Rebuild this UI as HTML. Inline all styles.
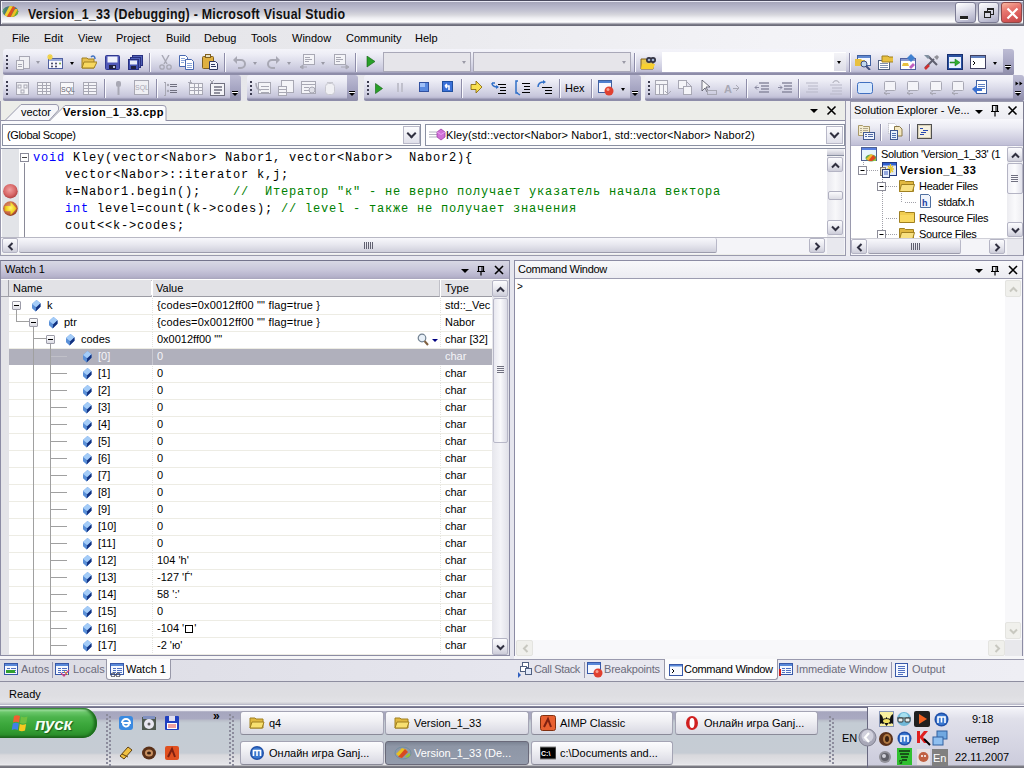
<!DOCTYPE html>
<html><head><meta charset="utf-8"><style>
*{margin:0;padding:0;box-sizing:border-box}
html,body{width:1024px;height:768px;overflow:hidden;background:#eeedf2;font-family:"Liberation Sans",sans-serif;font-size:11px;color:#000}
.a{position:absolute}
.t{position:absolute;white-space:pre;line-height:13px}
.mono{position:absolute;white-space:pre;font-family:"Liberation Mono",monospace;font-size:12px;letter-spacing:0.8px;line-height:17px}
#title{left:0;top:0;width:1024px;height:26px;background:linear-gradient(#4a4a5e 0,#4a4a5e 1px,#e8e8f4 1px,#e8e8f4 2px,#a6a6ba 2px,#b4b4c8 6px,#c4c4d2 11px,#d8d8de 15px,#eeeef2 18px,#fafafc 21px,#ffffff 22px,#d0d0d8 23px,#8a8a96 24px,#6c6c7a 25px,#6c6c7a 26px)}
.cb{width:21px;height:21px;border:1px solid #7c7c94;border-radius:3px;background:linear-gradient(160deg,#ffffff 0,#e4e4ee 35%,#c0c0d4 75%,#a8a8c0 100%)}
.tb{position:absolute;height:26px;border-radius:3px 3px 2px 2px;background:linear-gradient(#f4f4fa 0,#eeeef6 5px,#dcdcea 13px,#c8c7dc 21px,#b8b7d0 23px,#8e8da9 24px,#8e8da9 26px)}
.chev{position:absolute;top:0;height:100%;width:11px;background:linear-gradient(#b4b3cc,#9897b8);border-radius:0 3px 2px 0}
.grip{position:absolute;width:2px;height:14px;left:3px;top:6px;background:repeating-linear-gradient(#3c3c50 0,#3c3c50 2px,transparent 2px,transparent 4px)}
.sep{position:absolute;width:1px;height:19px;top:4px;background:#8e8da9;box-shadow:1px 0 0 #fafafe}
.dd{position:absolute;width:0;height:0;border-left:2.5px solid transparent;border-right:2.5px solid transparent;border-top:3px solid #000}
.ddg{border-top-color:#9a9aa6}
.hdr{position:absolute;height:19px;background:linear-gradient(#f2f2f6,#e4e4ec)}
.hdrA{background:linear-gradient(#d0cfe4,#b4b3d0)}
.sbtn{position:absolute;width:16px;height:15px;border:1px solid #b4b4c4;border-radius:2px;background:linear-gradient(#fcfcfe,#e4e4ec 60%,#cdcdd9)}
.cbtn{position:absolute;width:17px;height:18px;background:linear-gradient(#fcfcfe,#e0e0ea);border:1px solid #b8b8c8}
.cbtn::after{content:'';position:absolute;left:4px;top:6px;width:5px;height:5px;border-right:2px solid #303040;border-bottom:2px solid #303040;transform:rotate(45deg);top:3px}
</style></head><body>
<div class="a" style="left:0;top:26px;width:1024px;height:75px;background:linear-gradient(90deg,#e2e2e6,#ebebef 45%,#f3f3f7 75%,#f5f5f9)"></div>
<!-- TITLE BAR -->
<div id="title" class="a"></div>
<div class="a" style="left:0;top:0;width:1px;height:26px;background:#5a5a6e"></div><div class="a" style="left:1px;top:1px;width:1px;height:23px;background:#f4f4fa"></div>
<svg class="a" style="left:1px;top:5px" width="18" height="13" viewBox="0 0 18 13">
<defs><clipPath id="vsc"><ellipse cx="9.5" cy="6.5" rx="7.8" ry="5.6"/></clipPath></defs>
<g clip-path="url(#vsc)">
<rect x="0" y="0" width="18" height="13" fill="#4a7a78"/>
<path d="M2 13L9 0h4L6 13z" fill="#f0d030"/>
<path d="M5 13L12 1h3L9 13z" fill="#e05020"/>
<path d="M9 13l5-9h3l-4 9z" fill="#f0c020"/>
<path d="M12 13l4-7h2v7z" fill="#70b030"/>
<path d="M0 3h4L1 13H0z" fill="#5aa070"/>
</g>
</svg>
<div class="t" style="left:28px;top:6px;font-weight:bold;font-size:14px;line-height:16px;letter-spacing:0.3px;color:#111;transform:scaleX(0.885);transform-origin:0 0">Version_1_33 (Debugging) - Microsoft Visual Studio</div>
<!-- caption buttons -->
<div class="a cb" style="left:955px;top:2px"><div class="a" style="left:4px;top:13px;width:8px;height:3px;background:#222;box-shadow:0 1px 0 #fff"></div></div>
<div class="a cb" style="left:978px;top:2px"><div class="a" style="left:8px;top:5px;width:7px;height:7px;border:1px solid #222;border-top-width:2px"></div><div class="a" style="left:5px;top:8px;width:7px;height:7px;border:1px solid #222;border-top-width:2px;background:#d8d8e4"></div></div>
<div class="a cb" style="left:1001px;top:2px;background:linear-gradient(160deg,#f8b8a0 0,#e87870 35%,#d85858 70%,#c04848 100%);border-color:#904848"><svg class="a" style="left:4px;top:4px" width="13" height="13"><path d="M1.5 1.5L11.5 11.5M11.5 1.5L1.5 11.5" stroke="#fff" stroke-width="2.2"/></svg></div>
<div class="a" style="left:1023px;top:0;width:1px;height:26px;background:#6c6c7a"></div>

<!-- MENU -->
<div class="t" style="left:12px;top:32px">File</div>
<div class="t" style="left:44px;top:32px">Edit</div>
<div class="t" style="left:78px;top:32px">View</div>
<div class="t" style="left:116px;top:32px">Project</div>
<div class="t" style="left:166px;top:32px">Build</div>
<div class="t" style="left:204px;top:32px">Debug</div>
<div class="t" style="left:251px;top:32px">Tools</div>
<div class="t" style="left:292px;top:32px">Window</div>
<div class="t" style="left:346px;top:32px">Community</div>
<div class="t" style="left:415px;top:32px">Help</div>

<div class="tb" style="left:3px;top:49px;width:1011px"><div class="grip"></div></div>
<div class="a" style="left:1003px;top:49px;width:11px;height:26px;border-radius:0 3px 2px 0;background:linear-gradient(#bdbcd4,#a3a2c0 60%,#8e8da9)"></div>
<div class="a" style="left:1005px;top:65px;width:6px;height:1px;background:#000;box-shadow:0 1px 0 #fff"></div>
<div class="dd" style="left:1005px;top:67px;border-left-width:3px;border-right-width:3px;border-top-width:3px"></div>
<svg class="a" style="left:15px;top:55px" width="16" height="16" viewBox="0 0 16 16"><rect x="4.5" y="1.5" width="10" height="12" fill="#f0f0f4" stroke="#a8a8b4"/><rect x="1.5" y="5.5" width="7" height="9" fill="#f4f4f6" stroke="#a8a8b4"/><path d="M3 9.5h4M3 11.5h4" stroke="#a8a8b4"/></svg>
<div class="dd ddg" style="left:36px;top:61px"></div>
<svg class="a" style="left:47px;top:54px" width="16" height="16" viewBox="0 0 16 16"><rect x="1.5" y="4.5" width="14" height="10" fill="#f8f8fc" stroke="#5060a0"/><rect x="2" y="5" width="13" height="2" fill="#98a8d8"/><circle cx="5" cy="9.5" r="1" fill="#404060"/><circle cx="9" cy="9.5" r="1" fill="#404060"/><circle cx="13" cy="9.5" r="1" fill="#70a040"/><circle cx="5" cy="12.5" r="1" fill="#404060"/><circle cx="9" cy="12.5" r="1" fill="#404060"/><path d="M3 0v6M0 3h6M1 1l4 4M5 1l-4 4" stroke="#f0d040" stroke-width="1.2"/></svg>
<div class="dd" style="left:70px;top:62px"></div>
<svg class="a" style="left:81px;top:54px" width="16" height="16" viewBox="0 0 16 16"><path d="M1 4h5l1 1h6v9H1z" fill="#e8c050" stroke="#a08020"/><path d="M3 8h13l-3 6H1z" fill="#f8d860" stroke="#a08020"/><path d="M10 3c2-2 4-1 4 2" stroke="#4070c0" stroke-width="1.5" fill="none"/></svg>
<svg class="a" style="left:105px;top:55px" width="16" height="16" viewBox="0 0 16 16"><rect x="0.5" y="0.5" width="14" height="14" rx="1" fill="#5058b8" stroke="#303890"/><rect x="2.5" y="1.5" width="10" height="6" fill="#f0f2fc"/><rect x="4" y="10" width="7" height="4" fill="#202040"/><rect x="8" y="11" width="2" height="2" fill="#c0c8e0"/></svg>
<svg class="a" style="left:128px;top:55px" width="16" height="16" viewBox="0 0 16 16"><rect x="4.5" y="0.5" width="10" height="10" fill="#5060b8" stroke="#283080"/><rect x="2.5" y="2.5" width="10" height="10" fill="#5060b8" stroke="#283080"/><rect x="0.5" y="4.5" width="10" height="10" fill="#4050b0" stroke="#283080"/><rect x="2" y="5.5" width="7" height="4" fill="#e8ecf8"/><rect x="3" y="11" width="5" height="3" fill="#202040"/></svg>
<div class="a sep" style="left:149px;top:53px"></div>
<svg class="a" style="left:159px;top:55px" width="14" height="16" viewBox="0 0 14 16"><path d="M3 0l5 9M10 0L5 9" stroke="#a8a8b4" stroke-width="1.4"/><circle cx="3" cy="12" r="2.2" fill="none" stroke="#a8a8b4" stroke-width="1.3"/><circle cx="10" cy="12" r="2.2" fill="none" stroke="#a8a8b4" stroke-width="1.3"/></svg>
<svg class="a" style="left:179px;top:55px" width="16" height="16" viewBox="0 0 16 16"><path d="M0.5 0.5h6l2 2v9h-8z" fill="#fff" stroke="#4868b0"/><path d="M6.5 4.5h6l2 2v8h-8z" fill="#fff" stroke="#4868b0"/><path d="M2 3.5h4M2 5.5h4M2 7.5h3M8 8.5h5M8 10.5h5M8 12.5h5" stroke="#7090d0" stroke-width="0.8"/></svg>
<svg class="a" style="left:202px;top:54px" width="16" height="16" viewBox="0 0 16 16"><rect x="0.5" y="2.5" width="11" height="12" rx="1" fill="#e0b040" stroke="#806020"/><rect x="3.5" y="0.5" width="5" height="3" fill="#e8e0c0" stroke="#806020"/><path d="M7.5 7.5h6l2 2v6h-8z" fill="#f4f6fc" stroke="#303860"/><path d="M9 10.5h4M9 12.5h5" stroke="#303860"/></svg>
<div class="a sep" style="left:224px;top:53px"></div>
<svg class="a" style="left:233px;top:55px" width="13" height="16" viewBox="0 0 13 16"><path d="M3 5h5a4 4 0 0 1 0 8H5" stroke="#a8a8b4" stroke-width="2" fill="none"/><path d="M0 5l4-4v8z" fill="#a8a8b4"/></svg>
<div class="dd ddg" style="left:253px;top:62px"></div>
<svg class="a" style="left:267px;top:55px" width="13" height="16" viewBox="0 0 13 16"><path d="M10 5H5a4 4 0 0 0 0 8h3" stroke="#a8a8b4" stroke-width="2" fill="none"/><path d="M13 5L9 1v8z" fill="#a8a8b4"/></svg>
<div class="dd ddg" style="left:287px;top:62px"></div>
<svg class="a" style="left:300px;top:54px" width="16" height="16" viewBox="0 0 16 16"><rect x="3.5" y="0.5" width="11" height="10" fill="#f4f4f8" stroke="#a8a8b4"/><path d="M5 3.5h5M5 5.5h7M5 7.5h4" stroke="#a8a8b4"/><path d="M0 13h7M0 13l3-2v4z" stroke="#a8a8b4" fill="#a8a8b4"/></svg>
<div class="dd ddg" style="left:321px;top:62px"></div>
<svg class="a" style="left:333px;top:54px" width="16" height="16" viewBox="0 0 16 16"><rect x="1.5" y="0.5" width="11" height="10" fill="#f4f4f8" stroke="#a8a8b4"/><path d="M3 3.5h5M3 5.5h7M3 7.5h4" stroke="#a8a8b4"/><path d="M8 13h7M16 13l-3-2v4z" stroke="#a8a8b4" fill="#a8a8b4"/></svg>
<div class="a sep" style="left:355px;top:53px"></div>
<svg class="a" style="left:366px;top:56px" width="10" height="12" viewBox="0 0 10 12"><path d="M1 0l8 5.5L1 11z" fill="#28a028" stroke="#106010" stroke-width="0.6"/></svg>
<div class="a" style="left:383px;top:52px;width:88px;height:20px;background:#e6e5ea;border:1px solid #a9a8b8"></div>
<div class="dd ddg" style="left:462px;top:61px"></div>
<div class="a" style="left:473px;top:52px;width:158px;height:20px;background:#e6e5ea;border:1px solid #a9a8b8"></div>
<div class="dd ddg" style="left:622px;top:61px"></div>
<div class="a sep" style="left:634px;top:53px"></div>
<svg class="a" style="left:640px;top:55px" width="16" height="16" viewBox="0 0 16 16"><path d="M1 4h5l1 1h6v9H1z" fill="#e8c850" stroke="#806020"/><path d="M2 9h13l-2 5H1z" fill="#f8d030"/><circle cx="9" cy="5" r="3" fill="#303040"/><circle cx="13" cy="5" r="3" fill="#303040"/><circle cx="9" cy="5" r="1.3" fill="#a0b0d0"/><circle cx="13" cy="5" r="1.3" fill="#a0b0d0"/></svg>
<div class="a" style="left:662px;top:52px;width:184px;height:20px;background:#fff"></div>
<div class="a" style="left:834px;top:53px;width:12px;height:18px;background:linear-gradient(#f4f4f8,#dcdce6)"></div>
<div class="dd" style="left:837px;top:61px"></div>
<div class="a sep" style="left:849px;top:53px"></div>
<svg class="a" style="left:855px;top:54px" width="16" height="16" viewBox="0 0 16 16"><rect x="2.5" y="1.5" width="13" height="10" fill="#f4f8ff" stroke="#4060a0"/><rect x="3" y="2" width="12" height="2" fill="#6088d0"/><path d="M0 5h6l1 1h3v6H0z" fill="#e8c040"/><circle cx="9" cy="10" r="3" fill="#c0d8f0" stroke="#405080"/><path d="M11 12l4 4" stroke="#405080" stroke-width="2"/></svg>
<svg class="a" style="left:877px;top:54px" width="16" height="16" viewBox="0 0 16 16"><rect x="1.5" y="6.5" width="11" height="9" fill="#fff" stroke="#506080"/><path d="M3 9.5h8M3 11.5h8M3 13.5h8" stroke="#8090b0"/><path d="M5 2h6l1 1h5v5H5z" fill="#e8c040" stroke="#a08020"/></svg>
<svg class="a" style="left:900px;top:54px" width="16" height="16" viewBox="0 0 16 16"><rect x="0.5" y="4.5" width="15" height="11" fill="#fff" stroke="#5060a0"/><rect x="1" y="5" width="14" height="2" fill="#8898d0"/><path d="M11 0l4 4-4 4-4-4z" fill="#4080d0"/><path d="M3 9h5l1 3H2z" fill="#e8c040"/><path d="M9 13l4-4 2 2-4 4z" fill="#c060c0"/></svg>
<svg class="a" style="left:923px;top:54px" width="16" height="16" viewBox="0 0 16 16"><path d="M2 14L11 5M5 2l9 9" stroke="#606070" stroke-width="2"/><path d="M1 1l4 0 2 2-2 2-4-4z" fill="#8090a0"/><path d="M2 15l4-4" stroke="#d03030" stroke-width="2.5"/><path d="M11 3l3-2 2 2-2 3z" fill="#909098"/></svg>
<svg class="a" style="left:947px;top:54px" width="16" height="16" viewBox="0 0 16 16"><rect x="0.5" y="0.5" width="15" height="15" fill="#2850a0" stroke="#183070"/><rect x="2" y="3" width="12" height="11" fill="#e8f0ff"/><path d="M3 8h5V5l5 3.5-5 3.5V9H3z" fill="#30b030" stroke="#107010" stroke-width="0.5"/></svg>
<svg class="a" style="left:970px;top:55px" width="16" height="15" viewBox="0 0 16 15"><rect x="0.5" y="0.5" width="15" height="13" fill="#fff" stroke="#404060"/><rect x="1" y="1" width="14" height="2" fill="#6080c0"/><path d="M3 6l2 2-2 2" stroke="#000" fill="none"/></svg>
<div class="dd" style="left:993px;top:62px"></div>
<div class="tb" style="left:3px;top:75px;width:238px"><div class="grip"></div></div>
<div class="a" style="left:230px;top:75px;width:11px;height:26px;border-radius:0 3px 2px 0;background:linear-gradient(#bdbcd4,#a3a2c0 60%,#8e8da9)"></div>
<div class="a" style="left:232px;top:91px;width:6px;height:1px;background:#000;box-shadow:0 1px 0 #fff"></div>
<div class="dd" style="left:232px;top:93px;border-left-width:3px;border-right-width:3px;border-top-width:3px"></div>
<svg class="a" style="left:15px;top:81px" width="16" height="16" viewBox="0 0 16 16"><rect x="1.5" y="1.5" width="12" height="12" fill="#f4f4f8" stroke="#a8a8b4"/><rect x="3" y="4" width="3" height="3" fill="none" stroke="#a8a8b4"/><rect x="9" y="4" width="3" height="3" fill="none" stroke="#a8a8b4"/><rect x="6" y="9" width="3" height="3" fill="none" stroke="#a8a8b4"/></svg>
<svg class="a" style="left:37px;top:81px" width="16" height="16" viewBox="0 0 16 16"><rect x="0.5" y="1.5" width="13" height="12" fill="#f4f4f8" stroke="#a8a8b4"/><path d="M1 4.5h12M1 7.5h12M1 10.5h12M5.5 2v11M9.5 2v11" stroke="#a8a8b4"/></svg>
<svg class="a" style="left:60px;top:81px" width="16" height="16" viewBox="0 0 16 16"><rect x="0.5" y="1.5" width="13" height="12" fill="#f8f8fa" stroke="#a8a8b4"/><text x="1" y="11" font-size="7" font-family="Liberation Sans" fill="#606070">SQL</text></svg>
<svg class="a" style="left:83px;top:81px" width="16" height="16" viewBox="0 0 16 16"><rect x="0.5" y="1.5" width="13" height="12" fill="#f4f4f8" stroke="#a8a8b4"/><path d="M1 4.5h12M1 7.5h12M1 10.5h12M5.5 2v11" stroke="#a8a8b4"/></svg>
<div class="a sep" style="left:104px;top:79px"></div>
<svg class="a" style="left:114px;top:80px" width="9" height="16" viewBox="0 0 9 16"><rect x="2" y="1" width="5" height="6" rx="2" fill="#a8a8b4"/><path d="M4.5 7v8" stroke="#a8a8b4" stroke-width="2"/></svg>
<svg class="a" style="left:134px;top:80px" width="16" height="16" viewBox="0 0 16 16"><rect x="0.5" y="0.5" width="14" height="14" fill="#f0f0f4" stroke="#a8a8b4"/><text x="1" y="10" font-size="7" font-family="Liberation Sans" fill="#a8a8b4">SQL</text></svg>
<div class="a sep" style="left:156px;top:79px"></div>
<svg class="a" style="left:163px;top:81px" width="16" height="16" viewBox="0 0 16 16"><path d="M2.5 1v13M1 1.5h2M1 14.5h2" stroke="#a8a8b4"/><circle cx="5" cy="4" r="1.2" fill="#a8a8b4"/><circle cx="5" cy="10" r="1.2" fill="#a8a8b4"/><path d="M7 3.5h7M7 5.5h7M7 9.5h7M7 11.5h7" stroke="#707080"/></svg>
<svg class="a" style="left:188px;top:80px" width="16" height="16" viewBox="0 0 16 16"><rect x="1.5" y="3.5" width="13" height="11" fill="#f4f4f8" stroke="#a8a8b4"/><path d="M2 7.5h12M2 10.5h12M6.5 4v10M10.5 4v10" stroke="#a8a8b4"/><path d="M2.5 0v4M0 2.5h4" stroke="#a8a8b4"/></svg>
<svg class="a" style="left:209px;top:79px" width="16" height="17" viewBox="0 0 16 17"><rect x="1.5" y="4.5" width="14" height="12" fill="#f4f4f8" stroke="#707080"/><path d="M5 8h8M5 11h8M5 14h6" stroke="#707080" stroke-width="1.5"/><path d="M1 1l4 4M5 1l-4 4" stroke="#a8a8b4"/></svg>
<div class="tb" style="left:247px;top:75px;width:111px"><div class="grip"></div></div>
<div class="a" style="left:347px;top:75px;width:11px;height:26px;border-radius:0 3px 2px 0;background:linear-gradient(#bdbcd4,#a3a2c0 60%,#8e8da9)"></div>
<div class="a" style="left:349px;top:91px;width:6px;height:1px;background:#000;box-shadow:0 1px 0 #fff"></div>
<div class="dd" style="left:349px;top:93px;border-left-width:3px;border-right-width:3px;border-top-width:3px"></div>
<svg class="a" style="left:255px;top:80px" width="16" height="16" viewBox="0 0 16 16"><rect x="3.5" y="2.5" width="12" height="11" fill="#f4f4f8" stroke="#a8a8b4"/><path d="M6 6.5h8M6 9.5h8M6 12.5h8" stroke="#a8a8b4"/><path d="M1 3c0 5 2 7 5 7" stroke="#a8a8b4" stroke-width="1.5" fill="none"/></svg>
<svg class="a" style="left:278px;top:80px" width="16" height="16" viewBox="0 0 16 16"><rect x="3.5" y="0.5" width="12" height="12" fill="#f4f4f8" stroke="#a8a8b4"/><rect x="0.5" y="6.5" width="8" height="9" fill="#f4f4f8" stroke="#a8a8b4"/><path d="M1 9.5h7M1 12.5h7" stroke="#a8a8b4"/></svg>
<svg class="a" style="left:301px;top:80px" width="16" height="16" viewBox="0 0 16 16"><rect x="0.5" y="1.5" width="14" height="12" fill="#f4f4f8" stroke="#a8a8b4"/><path d="M1 4.5h13M3 7.5h5M3 10.5h5" stroke="#a8a8b4"/><circle cx="11" cy="10" r="3" fill="#e0e0e8" stroke="#a8a8b4"/></svg>
<svg class="a" style="left:323px;top:80px" width="14" height="16" viewBox="0 0 14 16"><rect x="2.5" y="3.5" width="9" height="11" rx="3" fill="#f0f0f4" stroke="#c8c8d0"/><path d="M4 2.5h6" stroke="#c8c8d0"/></svg>
<div class="tb" style="left:364px;top:75px;width:277px"><div class="grip"></div></div>
<div class="a" style="left:630px;top:75px;width:11px;height:26px;border-radius:0 3px 2px 0;background:linear-gradient(#bdbcd4,#a3a2c0 60%,#8e8da9)"></div>
<div class="a" style="left:632px;top:91px;width:6px;height:1px;background:#000;box-shadow:0 1px 0 #fff"></div>
<div class="dd" style="left:632px;top:93px;border-left-width:3px;border-right-width:3px;border-top-width:3px"></div>
<svg class="a" style="left:375px;top:83px" width="9" height="12" viewBox="0 0 9 12"><path d="M0.5 0.5l7 5-7 5z" fill="#28a028" stroke="#106010" stroke-width="0.6"/></svg>
<svg class="a" style="left:396px;top:82px" width="8" height="11" viewBox="0 0 8 11"><rect x="1" y="1" width="2" height="9" fill="#c0c0cc"/><rect x="5" y="1" width="2" height="9" fill="#c0c0cc"/></svg>
<svg class="a" style="left:419px;top:82px" width="10" height="10" viewBox="0 0 10 10"><rect x="0.5" y="0.5" width="9" height="9" fill="#5a8ae0" stroke="#3050a0"/><rect x="1" y="1" width="5" height="4" fill="#a0c0f8"/></svg>
<svg class="a" style="left:442px;top:81px" width="11" height="11" viewBox="0 0 11 11"><rect x="0.5" y="0.5" width="10" height="10" fill="#3a70d8" stroke="#2050a0"/><path d="M7 9V5H3M3 5l2-2M3 5l2 2" stroke="#fff" stroke-width="1.5" fill="none"/></svg>
<div class="a sep" style="left:461px;top:79px"></div>
<svg class="a" style="left:470px;top:80px" width="13" height="14" viewBox="0 0 13 14"><path d="M1 4.5h5V1l6 6-6 6V9.5H1z" fill="#f8e050" stroke="#806000" stroke-width="0.8"/></svg>
<svg class="a" style="left:490px;top:80px" width="17" height="15" viewBox="0 0 17 15"><path d="M2 3h3M2 3c0 4 4 4 6 4" stroke="#3070c8" stroke-width="1.5" fill="none"/><path d="M6 5l3 2-3 2" fill="#3070c8"/><path d="M8 4.5h8M10 7.5h6M10 10.5h6M8 13.5h8" stroke="#000"/></svg>
<svg class="a" style="left:514px;top:80px" width="17" height="16" viewBox="0 0 17 16"><path d="M4 1H2v12h2" stroke="#3070c8" stroke-width="1.5" fill="none"/><path d="M3 13l3 2" stroke="#3070c8" stroke-width="1.5"/><path d="M8 3.5h8M10 6.5h6M10 9.5h6M8 12.5h8" stroke="#000"/></svg>
<svg class="a" style="left:537px;top:80px" width="16" height="15" viewBox="0 0 16 15"><path d="M1 7c0-4 3-5 6-5" stroke="#3070c8" stroke-width="1.5" fill="none"/><path d="M6 0l3 2-3 2" fill="#3070c8"/><path d="M5 7.5h10M8 10.5h7M8 13.5h7" stroke="#000"/></svg>
<div class="a sep" style="left:559px;top:79px"></div>
<div class="t" style="left:565px;top:82px">Hex</div>
<div class="a sep" style="left:591px;top:79px"></div>
<svg class="a" style="left:598px;top:80px" width="16" height="16" viewBox="0 0 16 16"><rect x="0.5" y="0.5" width="13" height="12" fill="#f8f8ff" stroke="#4060a0"/><rect x="1" y="1" width="12" height="2" fill="#5080d0"/><circle cx="11" cy="11" r="4.5" fill="#e04030"/><circle cx="10" cy="9.5" r="1.5" fill="#f8a090"/></svg>
<div class="dd" style="left:621px;top:88px"></div>
<div class="tb" style="left:645px;top:75px;width:379px"><div class="grip"></div></div>
<div class="a" style="left:1013px;top:75px;width:11px;height:26px;border-radius:0 3px 2px 0;background:linear-gradient(#bdbcd4,#a3a2c0 60%,#8e8da9)"></div>
<div class="a" style="left:1015px;top:91px;width:6px;height:1px;background:#000;box-shadow:0 1px 0 #fff"></div>
<div class="dd" style="left:1015px;top:93px;border-left-width:3px;border-right-width:3px;border-top-width:3px"></div>
<svg class="a" style="left:655px;top:80px" width="16" height="16" viewBox="0 0 16 16"><rect x="0.5" y="0.5" width="12" height="14" fill="#f4f4f8" stroke="#a8a8b4"/><path d="M1 4.5h11M4.5 4v10M8.5 4v10" stroke="#a8a8b4"/><path d="M10 11l3 3 3-3" stroke="#a8a8b4" fill="none"/></svg>
<svg class="a" style="left:678px;top:80px" width="16" height="16" viewBox="0 0 16 16"><rect x="0.5" y="0.5" width="8" height="8" fill="#f4f4f8" stroke="#a8a8b4"/><rect x="5.5" y="6.5" width="8" height="8" fill="#f4f4f8" stroke="#a8a8b4"/><path d="M9 2l4 4" stroke="#a8a8b4"/></svg>
<svg class="a" style="left:701px;top:80px" width="16" height="16" viewBox="0 0 16 16"><path d="M1 0v11l3-3 2 4 1-1-2-4h4z" fill="#f8f8f8" stroke="#505060" stroke-width="0.8"/><rect x="6.5" y="10.5" width="9" height="4" fill="none" stroke="#a8a8b4"/></svg>
<svg class="a" style="left:724px;top:82px" width="16" height="16" viewBox="0 0 16 16"><text x="0" y="11" font-size="11" font-family="Liberation Sans" font-weight="bold" fill="#a8a8b4">A</text><path d="M9 6.5h5M12 3l3 3-3 3" stroke="#a8a8b4" fill="none"/></svg>
<div class="a sep" style="left:746px;top:79px"></div>
<svg class="a" style="left:754px;top:80px" width="16" height="16" viewBox="0 0 16 16"><path d="M5 3h10M7 6h8M7 9h8M5 12h10" stroke="#8a8aa0" stroke-width="1.5"/><path d="M1 7.5h4M1 7.5l2-2M1 7.5l2 2" stroke="#8a8aa0"/></svg>
<svg class="a" style="left:777px;top:80px" width="16" height="16" viewBox="0 0 16 16"><path d="M5 3h10M7 6h8M7 9h8M5 12h10" stroke="#8a8aa0" stroke-width="1.5"/><path d="M1 7.5h4M5 7.5l-2-2M5 7.5l-2 2" stroke="#8a8aa0"/></svg>
<div class="a sep" style="left:798px;top:79px"></div>
<svg class="a" style="left:804px;top:80px" width="16" height="16" viewBox="0 0 16 16"><path d="M2 3h12M4 6h10M4 9h10M2 12h12" stroke="#b8b8c8" stroke-width="1.2"/></svg>
<svg class="a" style="left:828px;top:79px" width="16" height="17" viewBox="0 0 16 17"><path d="M2 6h12M4 9h10M4 12h10M2 15h12" stroke="#b8b8c8" stroke-width="1.2"/><path d="M5 4c0-3 6-3 6 0" stroke="#a8a8b4" fill="none"/></svg>
<div class="a sep" style="left:850px;top:79px"></div>
<svg class="a" style="left:857px;top:80px" width="16" height="16" viewBox="0 0 16 16"><rect x="0.5" y="2.5" width="15" height="11" rx="2" fill="#d8e8fc" stroke="#4070c0"/></svg>
<svg class="a" style="left:882px;top:80px" width="16" height="16" viewBox="0 0 16 16"><rect x="2.5" y="1.5" width="11" height="9" rx="1" fill="#f4f4f8" stroke="#a8a8b4"/><path d="M2 13.5h6M5 11l-3 2 3 2" stroke="#a8a8b4" fill="none"/></svg>
<svg class="a" style="left:905px;top:80px" width="16" height="16" viewBox="0 0 16 16"><rect x="2.5" y="1.5" width="11" height="9" rx="1" fill="#f4f4f8" stroke="#a8a8b4"/><path d="M2 13.5h6M5 11l-3 2 3 2" stroke="#a8a8b4" fill="none"/></svg>
<svg class="a" style="left:928px;top:80px" width="16" height="16" viewBox="0 0 16 16"><rect x="2.5" y="1.5" width="11" height="9" rx="1" fill="#f4f4f8" stroke="#a8a8b4"/><path d="M2 13.5h6M5 11l-3 2 3 2" stroke="#a8a8b4" fill="none"/></svg>
<svg class="a" style="left:950px;top:80px" width="16" height="16" viewBox="0 0 16 16"><rect x="2.5" y="1.5" width="11" height="9" rx="1" fill="#f4f4f8" stroke="#a8a8b4"/><path d="M2 13.5h6M5 11l-3 2 3 2" stroke="#a8a8b4" fill="none"/></svg>
<svg class="a" style="left:972px;top:80px" width="16" height="16" viewBox="0 0 16 16"><rect x="4.5" y="0.5" width="10" height="13" fill="#fff" stroke="#4060a0"/><path d="M6 4.5h7M6 6.5h7M6 8.5h7" stroke="#6080c0"/><path d="M0 9l5-4v3h5v3H5v3z" fill="#3a70d0"/></svg>
<svg class="a" style="left:1015px;top:81px" width="8" height="5"><path d="M0.5 0.5l3 2-3 2zM4.5 0.5l3 2-3 2z" fill="#000"/></svg>
<!-- DOCUMENT AREA -->
<div class="a" style="left:0;top:101px;width:846px;height:155px;background:#ecede9;border-left:1px solid #9a9aae;border-right:1px solid #9a9aae;border-bottom:1px solid #9a9aae"></div>
<!-- tab strip line -->
<div class="a" style="left:1px;top:120px;width:844px;height:1px;background:#8e8ea4"></div>
<!-- inactive tab -->
<svg class="a" style="left:0;top:101px" width="180" height="21" viewBox="0 0 180 21">
<path d="M5 19.5 L21 3.5 L56 3.5 Q58 3.5 58.5 6 L58.5 9 L49 19.5 Z" fill="#f6f6f9" stroke="#9a9aae"/>
<path d="M49 20.5 L65 4.5 L163 4.5 Q166 4.5 166 7 L166 20.5 Z" fill="#fdfdfe" stroke="#9a9aae"/>
<path d="M50 20.5 L165.5 20.5" stroke="#fdfdfe" stroke-width="1.2"/>
</svg>
<div class="t" style="left:21px;top:106px">vector</div>
<div class="t" style="left:63px;top:106px;font-weight:bold;letter-spacing:0.5px">Version_1_33.cpp</div>
<!-- doc window buttons -->
<div class="dd" style="left:810px;top:109px;border-left-width:4px;border-right-width:4px;border-top-width:4px"></div>
<svg class="a" style="left:826px;top:105px" width="11" height="11"><path d="M1.5 1.5L9.5 9.5M9.5 1.5L1.5 9.5" stroke="#000" stroke-width="1.6"/></svg>
<!-- combo row -->
<div class="a" style="left:1px;top:121px;width:844px;height:27px;background:#fafafc"></div>
<div class="a" style="left:2px;top:124px;width:419px;height:22px;background:#fff;border:1px solid #8a90a2"></div>
<div class="a cbtn" style="left:403px;top:126px"></div>
<div class="t" style="left:7px;top:129px;letter-spacing:-0.35px">(Global Scope)</div>
<div class="a" style="left:425px;top:124px;width:420px;height:22px;background:#fff;border:1px solid #8a90a2"></div>
<div class="a cbtn" style="left:826px;top:126px"></div>
<svg class="a" style="left:428px;top:128px" width="18" height="13" viewBox="0 0 18 13"><path d="M1 4h8M1 6.5h8M1 9h8" stroke="#a0a0b0" stroke-width="0.8"/><path d="M13 1l4 3v5l-4 3-4-3V4z" fill="#d070d8" stroke="#a040a8" stroke-width="0.8"/><path d="M9 4l4 2.5 4-2.5" stroke="#f0b0f8" fill="none" stroke-width="0.8"/></svg>
<div class="t" style="left:446px;top:129px;letter-spacing:0.15px">Kley(std::vector&lt;Nabor&gt; Nabor1, std::vector&lt;Nabor&gt; Nabor2)</div>
<!-- editor -->
<div class="a" style="left:1px;top:148px;width:844px;height:106px;background:#fff;border-top:1px solid #8a90a2"></div>
<div class="a" style="left:2px;top:149px;width:17px;height:88px;background:#e2e4e8"></div>
<div class="a" style="left:20px;top:153px;width:9px;height:9px;border:1px solid #8a8a98;background:#fff"></div>
<div class="a" style="left:22px;top:157px;width:5px;height:1px;background:#444"></div>
<div class="a" style="left:24px;top:163px;width:1px;height:74px;background:#8a8a98"></div>
<svg class="a" style="left:2px;top:183px" width="17" height="34" viewBox="0 0 17 34">
<defs><radialGradient id="bp" cx="0.45" cy="0.4" r="0.65"><stop offset="0" stop-color="#f0a0a0"/><stop offset="0.6" stop-color="#d86868"/><stop offset="1" stop-color="#a83838"/></radialGradient>
<radialGradient id="ar" cx="0.5" cy="0.45" r="0.6"><stop offset="0" stop-color="#fff870"/><stop offset="0.6" stop-color="#f0d020"/><stop offset="1" stop-color="#d09010"/></radialGradient>
<radialGradient id="ac" cx="0.45" cy="0.4" r="0.65"><stop offset="0" stop-color="#e8a070"/><stop offset="0.7" stop-color="#c06040"/><stop offset="1" stop-color="#7a2810"/></radialGradient></defs>
<circle cx="8.4" cy="8.2" r="7.3" fill="url(#bp)"/>
<circle cx="8.4" cy="25.6" r="7.3" fill="url(#ac)"/>
<path d="M2.5 23h6v-4.2l6.2 6.8-6.2 6.8v-4.2h-6z" fill="url(#ar)"/>
</svg>
<div class="mono" style="left:33px;top:150px"><span style="color:#0000ff">void</span> Kley(vector&lt;Nabor&gt; Nabor1, vector&lt;Nabor&gt;  Nabor2){</div>
<div class="mono" style="left:33px;top:167px">    vector&lt;Nabor&gt;::iterator k,j;</div>
<div class="mono" style="left:33px;top:184px">    k=Nabor1.begin();    <span style="color:#008000">//  Итератор "к" - не верно получает указатель начала вектора</span></div>
<div class="mono" style="left:33px;top:201px">    <span style="color:#0000ff">int</span> level=count(k-&gt;codes); <span style="color:#008000">// level - также не получает значения</span></div>
<div class="mono" style="left:33px;top:218px">    cout&lt;&lt;k-&gt;codes;</div>
<!-- vertical scrollbar -->
<div class="a" style="left:827px;top:149px;width:17px;height:88px;background:linear-gradient(90deg,#e8e8ee,#f8f8fa 50%,#e8e8ee)"></div>
<div class="a" style="left:827px;top:149px;width:17px;height:7px;background:linear-gradient(#f4f4f8,#c8c8d4);border-bottom:1px solid #8a90a2"></div>
<div class="a sbtn" style="left:827px;top:157px"><svg class="a" style="left:3px;top:4px" width="9" height="7"><path d="M1 5.5L4.5 2 8 5.5" stroke="#303040" stroke-width="2" fill="none"/></svg></div>
<div class="a" style="left:828px;top:191px;width:15px;height:9px;border:1px solid #b0b0c0;border-radius:2px;background:linear-gradient(#fafafc,#dcdce4)"></div>
<div class="a sbtn" style="left:827px;top:220px"><svg class="a" style="left:3px;top:4px" width="9" height="7"><path d="M1 1.5L4.5 5 8 1.5" stroke="#303040" stroke-width="2" fill="none"/></svg></div>
<!-- horizontal scrollbar -->
<div class="a" style="left:1px;top:237px;width:844px;height:17px;background:#f4f4f8;border-top:1px solid #b8b8c4"></div>
<div class="a sbtn" style="left:2px;top:238px"><svg class="a" style="left:4px;top:3px" width="7" height="9"><path d="M5.5 1L2 4.5 5.5 8" stroke="#303040" stroke-width="2" fill="none"/></svg></div>
<div class="a" style="left:19px;top:238px;width:698px;height:15px;border-radius:2px;background:linear-gradient(#f8f8fc,#e6e6ee 50%,#cfcfdb);border-bottom:1px solid #9c9cac;border-right:1px solid #b8b8c8"></div>
<div class="a" style="left:364px;top:242px;width:9px;height:7px;background:repeating-linear-gradient(90deg,#606070 0,#606070 1px,transparent 1px,transparent 2px)"></div>
<div class="a sbtn" style="left:809px;top:238px"><svg class="a" style="left:4px;top:3px" width="7" height="9"><path d="M1.5 1L5 4.5 1.5 8" stroke="#303040" stroke-width="2" fill="none"/></svg></div>
<div class="a" style="left:827px;top:238px;width:17px;height:16px;background:#e8e8ee"></div>

<!-- SOLUTION EXPLORER -->
<div class="a" style="left:850px;top:101px;width:174px;height:155px;background:#fff;border:1px solid #9a9aae;border-right-color:#7c7c90"></div>
<div class="a" style="left:851px;top:102px;width:172px;height:17px;background:linear-gradient(#f6f6f9,#ececf2)"></div>
<div class="t" style="left:854px;top:104px">Solution Explorer - Ve...</div>
<div class="dd" style="left:975px;top:110px;border-left-width:4px;border-right-width:4px;border-top-width:4px"></div>
<svg class="a" style="left:990px;top:104px" width="10" height="13"><path d="M2.5 1.5h5v6h-5z M1 7.5h8 M5 7.5v5" stroke="#000" stroke-width="1.2" fill="none"/><path d="M6 2v5" stroke="#000"/></svg>
<svg class="a" style="left:1007px;top:105px" width="11" height="11"><path d="M1.5 1.5L9.5 9.5M9.5 1.5L1.5 9.5" stroke="#000" stroke-width="1.6"/></svg>
<div class="a" style="left:851px;top:119px;width:172px;height:27px;background:linear-gradient(#f8f8fc 0,#ececf4 8px,#d4d3e4 18px,#c0bfd6 26px,#a8a7c2 27px)"></div>
<svg class="a" style="left:858px;top:123px" width="17" height="17" viewBox="0 0 17 17"><path d="M0.5 2.5h4l1 1h6v9h-11z" fill="#f4ecd0" stroke="#a89868"/><path d="M2 5.5h2M5 5.5h5M2 7.5h2M5 7.5h5M2 9.5h2" stroke="#b0a890"/><rect x="5.5" y="9.5" width="11" height="7" fill="#f0f4fc" stroke="#405890"/><path d="M7 11.5h2M10 11.5h5M7 13.5h2M10 13.5h5" stroke="#506aa8"/></svg>
<div class="a" style="left:880px;top:124px;width:1px;height:17px;background:#8e8da9;box-shadow:1px 0 0 #fff"></div>
<svg class="a" style="left:887px;top:123px" width="17" height="17" viewBox="0 0 17 17"><path d="M1.5 0.5h6l2 2v8h-8z" fill="#fff" stroke="#b0b0b8" stroke-dasharray="1 1"/><path d="M7.5 3.5h5l2.5 2.5v7h-7.5z" fill="#f4e8c0" stroke="#8a7848"/><rect x="3.5" y="7.5" width="7" height="9" fill="#e8f0fc" stroke="#405890"/><path d="M5 10.5h4M5 12.5h4M5 14.5h4" stroke="#5070b0"/></svg>
<div class="a" style="left:909px;top:124px;width:1px;height:17px;background:#8e8da9;box-shadow:1px 0 0 #fff"></div>
<svg class="a" style="left:917px;top:124px" width="15" height="15" viewBox="0 0 15 15"><rect x="0.5" y="0.5" width="14" height="14" fill="#f4f0e0" stroke="#505050"/><rect x="1.5" y="1.5" width="12" height="12" fill="none" stroke="#d8d0b8"/><path d="M3 4.5h3M6 6.5h5M4 8.5h5M3 10.5h4" stroke="#2848b0"/></svg>
<!-- tree -->
<svg class="a" style="left:851px;top:146px" width="156" height="92" viewBox="0 0 156 92">
<g stroke="#a0a0a8" stroke-dasharray="1 1" fill="none">
<path d="M12.5 16v4M12.5 25v0"/><path d="M16 24.5h12"/>
<path d="M31.5 31v5M35 40.5h12M31.5 45v44M35 72.5h12M35 88.5h12"/>
<path d="M50.5 47v9M54 56.5h12"/>
</g>
<rect x="7.5" y="20.5" width="8" height="8" fill="#fff" stroke="#8c8c98"/><path d="M9.5 24.5h4" stroke="#000"/>
<rect x="26.5" y="36.5" width="8" height="8" fill="#fff" stroke="#8c8c98"/><path d="M28.5 40.5h4" stroke="#000"/>
<rect x="26.5" y="84.5" width="8" height="8" fill="#fff" stroke="#8c8c98"/><path d="M28.5 88.5h4" stroke="#000"/>
<!-- solution icon -->
<rect x="10.5" y="1.5" width="15" height="13" fill="#e8f6fc" stroke="#506090"/><rect x="11" y="2" width="14" height="2" fill="#5880e0"/><ellipse cx="20" cy="12" rx="5.5" ry="3.5" fill="#60a850"/><path d="M15 13l5-5 3 2-4 5z" fill="#f0c030"/><path d="M17 15l5-6 3 3-4 3z" fill="#e04820"/><path d="M22 15l3-3v3z" fill="#90c840"/>
<!-- project icon -->
<rect x="31.5" y="16.5" width="14" height="13" fill="#e0e8f8" stroke="#203880"/><rect x="32" y="17" width="13" height="2.5" fill="#3060d0"/><path d="M37 20l5 6M42 20l-5 6M39.5 18v9M36 23h7" stroke="#e8c830" stroke-width="1.3"/><rect x="29.5" y="21.5" width="5" height="8" fill="#f0e8d0" stroke="#8a8070"/><rect x="31.5" y="23.5" width="7" height="8" fill="#e8f0fc" stroke="#304070"/><path d="M33 26h4M33 28h4" stroke="#4060c0"/>
<!-- folders -->
<g><path d="M48.5 34.5h5l1 1h8v10h-14z" fill="#e0b840" stroke="#a08020"/><path d="M50.5 38.5h13l-2 7h-13z" fill="#f8e080" stroke="#a08020"/></g>
<g><path d="M69.5 48.5h8l2 2v11h-10z" fill="#f0f4fc" stroke="#5070a0"/><text x="71" y="60" font-size="9" font-family="Liberation Sans" font-weight="bold" fill="#2040a0">h</text></g>
<g><path d="M48.5 65.5h5l1 1h9v10h-15z" fill="#f0cc50" stroke="#a08020"/><rect x="49" y="69" width="14" height="7" fill="#f8d860"/></g>
<g><path d="M48.5 82.5h5l1 1h8v10h-14z" fill="#e0b840" stroke="#a08020"/><path d="M50.5 86.5h13l-2 7h-13z" fill="#f8e080" stroke="#a08020"/></g>
</svg>
<div class="t" style="left:881px;top:148px;letter-spacing:-0.3px">Solution 'Version_1_33' (1</div>
<div class="t" style="left:900px;top:164px;font-weight:bold;letter-spacing:0.5px">Version_1_33</div>
<div class="t" style="left:919px;top:180px;letter-spacing:-0.3px">Header Files</div>
<div class="t" style="left:938px;top:196px;letter-spacing:-0.3px">stdafx.h</div>
<div class="t" style="left:919px;top:212px;letter-spacing:-0.3px">Resource Files</div>
<div class="t" style="left:919px;top:228px;height:10px;overflow:hidden;letter-spacing:-0.3px">Source Files</div>
<!-- SE vscroll -->
<div class="a" style="left:1007px;top:146px;width:16px;height:92px;background:linear-gradient(90deg,#ececf0,#fafafc 50%,#ececf0)"></div>
<div class="a sbtn" style="left:1007px;top:147px"><svg class="a" style="left:3px;top:4px" width="9" height="7"><path d="M1 5.5L4.5 2 8 5.5" stroke="#303040" stroke-width="2" fill="none"/></svg></div>
<div class="a" style="left:1007px;top:163px;width:16px;height:31px;border:1px solid #b4b4c4;border-radius:2px;background:linear-gradient(90deg,#f0f0f6,#fcfcfe 50%,#e0e0ea)"></div>
<div class="a" style="left:1011px;top:175px;width:7px;height:7px;background:repeating-linear-gradient(#707080 0,#707080 1px,transparent 1px,transparent 2px)"></div>
<div class="a sbtn" style="left:1007px;top:222px"><svg class="a" style="left:3px;top:4px" width="9" height="7"><path d="M1 1.5L4.5 5 8 1.5" stroke="#303040" stroke-width="2" fill="none"/></svg></div>
<!-- SE hscroll -->
<div class="a" style="left:851px;top:238px;width:172px;height:17px;background:#f4f4f8;border-top:1px solid #d0d0d8"></div>
<div class="a sbtn" style="left:851px;top:239px"><svg class="a" style="left:4px;top:3px" width="7" height="9"><path d="M5.5 1L2 4.5 5.5 8" stroke="#303040" stroke-width="2" fill="none"/></svg></div>
<div class="a" style="left:868px;top:239px;width:93px;height:15px;border-radius:2px;background:linear-gradient(#f8f8fc,#e6e6ee 50%,#cfcfdb);border-bottom:1px solid #9c9cac;border-right:1px solid #b8b8c8"></div>
<div class="a" style="left:911px;top:243px;width:9px;height:7px;background:repeating-linear-gradient(90deg,#606070 0,#606070 1px,transparent 1px,transparent 2px)"></div>
<div class="a sbtn" style="left:989px;top:239px"><svg class="a" style="left:4px;top:3px" width="7" height="9"><path d="M1.5 1L5 4.5 1.5 8" stroke="#303040" stroke-width="2" fill="none"/></svg></div>
<div class="a" style="left:1007px;top:239px;width:16px;height:16px;background:#e8e8ee"></div>

<div class="a" style="left:0;top:256px;width:1024px;height:4px;background:#e8e8f0"></div>
<div class="a" style="left:0;top:260px;width:510px;height:396px;background:#fff;border:1px solid #8c8ca4;border-top-color:#74748c"></div>
<div class="a" style="left:1px;top:261px;width:508px;height:18px;background:linear-gradient(#d8d8e4,#c8c6da 50%,#b6b3cc 85%,#a8a5bc)"></div>
<div class="t" style="left:5px;top:263px">Watch 1</div>
<div class="dd" style="left:461px;top:269px;border-left-width:4px;border-right-width:4px;border-top-width:4px"></div>
<svg class="a" style="left:476px;top:265px" width="10" height="11"><path d="M2.5 1.5h5v5h-5z M1 6.5h8 M5 6.5v4" stroke="#000" stroke-width="1.2" fill="none"/><path d="M6 2v4" stroke="#000"/></svg>
<svg class="a" style="left:494px;top:265px" width="10" height="10"><path d="M1 1L9 9M9 1L1 9" stroke="#000" stroke-width="1.6"/></svg>
<div class="a" style="left:1px;top:279px;width:491px;height:18px;background:#fff"></div>
<div class="a" style="left:1px;top:280px;width:8px;height:17px;background:#e4e4e8;border-right:1px solid #a0a0a8;border-bottom:1px solid #a0a0a8"></div>
<div class="a" style="left:9px;top:280px;width:143px;height:17px;background:#e2e2e6;border-bottom:1px solid #9c9ca4;border-right:1px solid #c0c0c8"></div>
<div class="a" style="left:153px;top:280px;width:287px;height:17px;background:#e2e2e6;border-bottom:1px solid #9c9ca4;border-right:1px solid #c0c0c8"></div>
<div class="a" style="left:441px;top:280px;width:51px;height:17px;background:#e2e2e6;border-bottom:1px solid #9c9ca4"></div>
<div class="a" style="left:151px;top:281px;width:1px;height:14px;background:#fff"></div>
<div class="t" style="left:13px;top:282px">Name</div>
<div class="t" style="left:156px;top:282px">Value</div>
<div class="t" style="left:445px;top:282px">Type</div>
<div class="a" style="left:1px;top:297px;width:8px;height:358px;background:#e4e4e8"></div>
<div class="a" style="left:9px;top:314px;width:483px;height:1px;background:#edece4"></div>
<div class="a" style="left:152px;top:298px;width:1px;height:16px;background:repeating-linear-gradient(#e4e4e0 0,#e4e4e0 1px,transparent 1px,transparent 2px)"></div>
<div class="a" style="left:440px;top:298px;width:1px;height:16px;background:repeating-linear-gradient(#e4e4e0 0,#e4e4e0 1px,transparent 1px,transparent 2px)"></div>
<svg class="a" style="left:32px;top:300px" width="9" height="12" viewBox="0 0 9 12"><path d="M4.5 0L8.5 3.2V6.8L3.6 11.5 0 8.3V4z" fill="#5a90d8"/><path d="M0 4L4.5 0 8.5 3.2 4.3 7.2z" fill="#a4ccf8"/><path d="M8.5 3.2V6.8L3.6 11.5 4.3 7.2z" fill="#12307e"/></svg>
<div class="t" style="left:47px;top:299px;color:#000">k</div>
<div class="t" style="left:157px;top:299px;color:#000;width:280px;overflow:hidden;letter-spacing:0.18px;">{codes=0x0012ff00 "" flag=true }</div>
<div class="t" style="left:445px;top:299px;color:#000;width:46px;overflow:hidden">std::_Vec</div>
<div class="a" style="left:9px;top:331px;width:483px;height:1px;background:#edece4"></div>
<div class="a" style="left:152px;top:315px;width:1px;height:16px;background:repeating-linear-gradient(#e4e4e0 0,#e4e4e0 1px,transparent 1px,transparent 2px)"></div>
<div class="a" style="left:440px;top:315px;width:1px;height:16px;background:repeating-linear-gradient(#e4e4e0 0,#e4e4e0 1px,transparent 1px,transparent 2px)"></div>
<svg class="a" style="left:49px;top:317px" width="9" height="12" viewBox="0 0 9 12"><path d="M4.5 0L8.5 3.2V6.8L3.6 11.5 0 8.3V4z" fill="#5a90d8"/><path d="M0 4L4.5 0 8.5 3.2 4.3 7.2z" fill="#a4ccf8"/><path d="M8.5 3.2V6.8L3.6 11.5 4.3 7.2z" fill="#12307e"/></svg>
<div class="t" style="left:64px;top:316px;color:#000">ptr</div>
<div class="t" style="left:157px;top:316px;color:#000;width:280px;overflow:hidden;letter-spacing:0.18px;">{codes=0x0012ff00 "" flag=true }</div>
<div class="t" style="left:445px;top:316px;color:#000;width:46px;overflow:hidden">Nabor</div>
<div class="a" style="left:9px;top:348px;width:483px;height:1px;background:#edece4"></div>
<div class="a" style="left:152px;top:332px;width:1px;height:16px;background:repeating-linear-gradient(#e4e4e0 0,#e4e4e0 1px,transparent 1px,transparent 2px)"></div>
<div class="a" style="left:440px;top:332px;width:1px;height:16px;background:repeating-linear-gradient(#e4e4e0 0,#e4e4e0 1px,transparent 1px,transparent 2px)"></div>
<svg class="a" style="left:66px;top:334px" width="9" height="12" viewBox="0 0 9 12"><path d="M4.5 0L8.5 3.2V6.8L3.6 11.5 0 8.3V4z" fill="#5a90d8"/><path d="M0 4L4.5 0 8.5 3.2 4.3 7.2z" fill="#a4ccf8"/><path d="M8.5 3.2V6.8L3.6 11.5 4.3 7.2z" fill="#12307e"/></svg>
<div class="t" style="left:81px;top:333px;color:#000">codes</div>
<div class="t" style="left:157px;top:333px;color:#000;width:280px;overflow:hidden;">0x0012ff00 ""</div>
<div class="t" style="left:445px;top:333px;color:#000;width:46px;overflow:hidden">char [32]</div>
<div class="a" style="left:9px;top:349px;width:483px;height:16px;background:#b0b0bc"></div>
<div class="a" style="left:152px;top:349px;width:1px;height:16px;background:#c8c8d0"></div>
<svg class="a" style="left:83px;top:351px" width="9" height="12" viewBox="0 0 9 12"><path d="M4.5 0L8.5 3.2V6.8L3.6 11.5 0 8.3V4z" fill="#5a90d8"/><path d="M0 4L4.5 0 8.5 3.2 4.3 7.2z" fill="#a4ccf8"/><path d="M8.5 3.2V6.8L3.6 11.5 4.3 7.2z" fill="#12307e"/></svg>
<div class="t" style="left:98px;top:350px;color:#f4f4f8">[0]</div>
<div class="t" style="left:157px;top:350px;color:#f4f4f8;width:280px;overflow:hidden;">0</div>
<div class="t" style="left:445px;top:350px;color:#f4f4f8;width:46px;overflow:hidden">char</div>
<div class="a" style="left:9px;top:382px;width:483px;height:1px;background:#edece4"></div>
<div class="a" style="left:152px;top:366px;width:1px;height:16px;background:repeating-linear-gradient(#e4e4e0 0,#e4e4e0 1px,transparent 1px,transparent 2px)"></div>
<div class="a" style="left:440px;top:366px;width:1px;height:16px;background:repeating-linear-gradient(#e4e4e0 0,#e4e4e0 1px,transparent 1px,transparent 2px)"></div>
<svg class="a" style="left:83px;top:368px" width="9" height="12" viewBox="0 0 9 12"><path d="M4.5 0L8.5 3.2V6.8L3.6 11.5 0 8.3V4z" fill="#5a90d8"/><path d="M0 4L4.5 0 8.5 3.2 4.3 7.2z" fill="#a4ccf8"/><path d="M8.5 3.2V6.8L3.6 11.5 4.3 7.2z" fill="#12307e"/></svg>
<div class="t" style="left:98px;top:367px;color:#000">[1]</div>
<div class="t" style="left:157px;top:367px;color:#000;width:280px;overflow:hidden;">0</div>
<div class="t" style="left:445px;top:367px;color:#000;width:46px;overflow:hidden">char</div>
<div class="a" style="left:9px;top:399px;width:483px;height:1px;background:#edece4"></div>
<div class="a" style="left:152px;top:383px;width:1px;height:16px;background:repeating-linear-gradient(#e4e4e0 0,#e4e4e0 1px,transparent 1px,transparent 2px)"></div>
<div class="a" style="left:440px;top:383px;width:1px;height:16px;background:repeating-linear-gradient(#e4e4e0 0,#e4e4e0 1px,transparent 1px,transparent 2px)"></div>
<svg class="a" style="left:83px;top:385px" width="9" height="12" viewBox="0 0 9 12"><path d="M4.5 0L8.5 3.2V6.8L3.6 11.5 0 8.3V4z" fill="#5a90d8"/><path d="M0 4L4.5 0 8.5 3.2 4.3 7.2z" fill="#a4ccf8"/><path d="M8.5 3.2V6.8L3.6 11.5 4.3 7.2z" fill="#12307e"/></svg>
<div class="t" style="left:98px;top:384px;color:#000">[2]</div>
<div class="t" style="left:157px;top:384px;color:#000;width:280px;overflow:hidden;">0</div>
<div class="t" style="left:445px;top:384px;color:#000;width:46px;overflow:hidden">char</div>
<div class="a" style="left:9px;top:416px;width:483px;height:1px;background:#edece4"></div>
<div class="a" style="left:152px;top:400px;width:1px;height:16px;background:repeating-linear-gradient(#e4e4e0 0,#e4e4e0 1px,transparent 1px,transparent 2px)"></div>
<div class="a" style="left:440px;top:400px;width:1px;height:16px;background:repeating-linear-gradient(#e4e4e0 0,#e4e4e0 1px,transparent 1px,transparent 2px)"></div>
<svg class="a" style="left:83px;top:402px" width="9" height="12" viewBox="0 0 9 12"><path d="M4.5 0L8.5 3.2V6.8L3.6 11.5 0 8.3V4z" fill="#5a90d8"/><path d="M0 4L4.5 0 8.5 3.2 4.3 7.2z" fill="#a4ccf8"/><path d="M8.5 3.2V6.8L3.6 11.5 4.3 7.2z" fill="#12307e"/></svg>
<div class="t" style="left:98px;top:401px;color:#000">[3]</div>
<div class="t" style="left:157px;top:401px;color:#000;width:280px;overflow:hidden;">0</div>
<div class="t" style="left:445px;top:401px;color:#000;width:46px;overflow:hidden">char</div>
<div class="a" style="left:9px;top:433px;width:483px;height:1px;background:#edece4"></div>
<div class="a" style="left:152px;top:417px;width:1px;height:16px;background:repeating-linear-gradient(#e4e4e0 0,#e4e4e0 1px,transparent 1px,transparent 2px)"></div>
<div class="a" style="left:440px;top:417px;width:1px;height:16px;background:repeating-linear-gradient(#e4e4e0 0,#e4e4e0 1px,transparent 1px,transparent 2px)"></div>
<svg class="a" style="left:83px;top:419px" width="9" height="12" viewBox="0 0 9 12"><path d="M4.5 0L8.5 3.2V6.8L3.6 11.5 0 8.3V4z" fill="#5a90d8"/><path d="M0 4L4.5 0 8.5 3.2 4.3 7.2z" fill="#a4ccf8"/><path d="M8.5 3.2V6.8L3.6 11.5 4.3 7.2z" fill="#12307e"/></svg>
<div class="t" style="left:98px;top:418px;color:#000">[4]</div>
<div class="t" style="left:157px;top:418px;color:#000;width:280px;overflow:hidden;">0</div>
<div class="t" style="left:445px;top:418px;color:#000;width:46px;overflow:hidden">char</div>
<div class="a" style="left:9px;top:450px;width:483px;height:1px;background:#edece4"></div>
<div class="a" style="left:152px;top:434px;width:1px;height:16px;background:repeating-linear-gradient(#e4e4e0 0,#e4e4e0 1px,transparent 1px,transparent 2px)"></div>
<div class="a" style="left:440px;top:434px;width:1px;height:16px;background:repeating-linear-gradient(#e4e4e0 0,#e4e4e0 1px,transparent 1px,transparent 2px)"></div>
<svg class="a" style="left:83px;top:436px" width="9" height="12" viewBox="0 0 9 12"><path d="M4.5 0L8.5 3.2V6.8L3.6 11.5 0 8.3V4z" fill="#5a90d8"/><path d="M0 4L4.5 0 8.5 3.2 4.3 7.2z" fill="#a4ccf8"/><path d="M8.5 3.2V6.8L3.6 11.5 4.3 7.2z" fill="#12307e"/></svg>
<div class="t" style="left:98px;top:435px;color:#000">[5]</div>
<div class="t" style="left:157px;top:435px;color:#000;width:280px;overflow:hidden;">0</div>
<div class="t" style="left:445px;top:435px;color:#000;width:46px;overflow:hidden">char</div>
<div class="a" style="left:9px;top:467px;width:483px;height:1px;background:#edece4"></div>
<div class="a" style="left:152px;top:451px;width:1px;height:16px;background:repeating-linear-gradient(#e4e4e0 0,#e4e4e0 1px,transparent 1px,transparent 2px)"></div>
<div class="a" style="left:440px;top:451px;width:1px;height:16px;background:repeating-linear-gradient(#e4e4e0 0,#e4e4e0 1px,transparent 1px,transparent 2px)"></div>
<svg class="a" style="left:83px;top:453px" width="9" height="12" viewBox="0 0 9 12"><path d="M4.5 0L8.5 3.2V6.8L3.6 11.5 0 8.3V4z" fill="#5a90d8"/><path d="M0 4L4.5 0 8.5 3.2 4.3 7.2z" fill="#a4ccf8"/><path d="M8.5 3.2V6.8L3.6 11.5 4.3 7.2z" fill="#12307e"/></svg>
<div class="t" style="left:98px;top:452px;color:#000">[6]</div>
<div class="t" style="left:157px;top:452px;color:#000;width:280px;overflow:hidden;">0</div>
<div class="t" style="left:445px;top:452px;color:#000;width:46px;overflow:hidden">char</div>
<div class="a" style="left:9px;top:484px;width:483px;height:1px;background:#edece4"></div>
<div class="a" style="left:152px;top:468px;width:1px;height:16px;background:repeating-linear-gradient(#e4e4e0 0,#e4e4e0 1px,transparent 1px,transparent 2px)"></div>
<div class="a" style="left:440px;top:468px;width:1px;height:16px;background:repeating-linear-gradient(#e4e4e0 0,#e4e4e0 1px,transparent 1px,transparent 2px)"></div>
<svg class="a" style="left:83px;top:470px" width="9" height="12" viewBox="0 0 9 12"><path d="M4.5 0L8.5 3.2V6.8L3.6 11.5 0 8.3V4z" fill="#5a90d8"/><path d="M0 4L4.5 0 8.5 3.2 4.3 7.2z" fill="#a4ccf8"/><path d="M8.5 3.2V6.8L3.6 11.5 4.3 7.2z" fill="#12307e"/></svg>
<div class="t" style="left:98px;top:469px;color:#000">[7]</div>
<div class="t" style="left:157px;top:469px;color:#000;width:280px;overflow:hidden;">0</div>
<div class="t" style="left:445px;top:469px;color:#000;width:46px;overflow:hidden">char</div>
<div class="a" style="left:9px;top:501px;width:483px;height:1px;background:#edece4"></div>
<div class="a" style="left:152px;top:485px;width:1px;height:16px;background:repeating-linear-gradient(#e4e4e0 0,#e4e4e0 1px,transparent 1px,transparent 2px)"></div>
<div class="a" style="left:440px;top:485px;width:1px;height:16px;background:repeating-linear-gradient(#e4e4e0 0,#e4e4e0 1px,transparent 1px,transparent 2px)"></div>
<svg class="a" style="left:83px;top:487px" width="9" height="12" viewBox="0 0 9 12"><path d="M4.5 0L8.5 3.2V6.8L3.6 11.5 0 8.3V4z" fill="#5a90d8"/><path d="M0 4L4.5 0 8.5 3.2 4.3 7.2z" fill="#a4ccf8"/><path d="M8.5 3.2V6.8L3.6 11.5 4.3 7.2z" fill="#12307e"/></svg>
<div class="t" style="left:98px;top:486px;color:#000">[8]</div>
<div class="t" style="left:157px;top:486px;color:#000;width:280px;overflow:hidden;">0</div>
<div class="t" style="left:445px;top:486px;color:#000;width:46px;overflow:hidden">char</div>
<div class="a" style="left:9px;top:518px;width:483px;height:1px;background:#edece4"></div>
<div class="a" style="left:152px;top:502px;width:1px;height:16px;background:repeating-linear-gradient(#e4e4e0 0,#e4e4e0 1px,transparent 1px,transparent 2px)"></div>
<div class="a" style="left:440px;top:502px;width:1px;height:16px;background:repeating-linear-gradient(#e4e4e0 0,#e4e4e0 1px,transparent 1px,transparent 2px)"></div>
<svg class="a" style="left:83px;top:504px" width="9" height="12" viewBox="0 0 9 12"><path d="M4.5 0L8.5 3.2V6.8L3.6 11.5 0 8.3V4z" fill="#5a90d8"/><path d="M0 4L4.5 0 8.5 3.2 4.3 7.2z" fill="#a4ccf8"/><path d="M8.5 3.2V6.8L3.6 11.5 4.3 7.2z" fill="#12307e"/></svg>
<div class="t" style="left:98px;top:503px;color:#000">[9]</div>
<div class="t" style="left:157px;top:503px;color:#000;width:280px;overflow:hidden;">0</div>
<div class="t" style="left:445px;top:503px;color:#000;width:46px;overflow:hidden">char</div>
<div class="a" style="left:9px;top:535px;width:483px;height:1px;background:#edece4"></div>
<div class="a" style="left:152px;top:519px;width:1px;height:16px;background:repeating-linear-gradient(#e4e4e0 0,#e4e4e0 1px,transparent 1px,transparent 2px)"></div>
<div class="a" style="left:440px;top:519px;width:1px;height:16px;background:repeating-linear-gradient(#e4e4e0 0,#e4e4e0 1px,transparent 1px,transparent 2px)"></div>
<svg class="a" style="left:83px;top:521px" width="9" height="12" viewBox="0 0 9 12"><path d="M4.5 0L8.5 3.2V6.8L3.6 11.5 0 8.3V4z" fill="#5a90d8"/><path d="M0 4L4.5 0 8.5 3.2 4.3 7.2z" fill="#a4ccf8"/><path d="M8.5 3.2V6.8L3.6 11.5 4.3 7.2z" fill="#12307e"/></svg>
<div class="t" style="left:98px;top:520px;color:#000">[10]</div>
<div class="t" style="left:157px;top:520px;color:#000;width:280px;overflow:hidden;">0</div>
<div class="t" style="left:445px;top:520px;color:#000;width:46px;overflow:hidden">char</div>
<div class="a" style="left:9px;top:552px;width:483px;height:1px;background:#edece4"></div>
<div class="a" style="left:152px;top:536px;width:1px;height:16px;background:repeating-linear-gradient(#e4e4e0 0,#e4e4e0 1px,transparent 1px,transparent 2px)"></div>
<div class="a" style="left:440px;top:536px;width:1px;height:16px;background:repeating-linear-gradient(#e4e4e0 0,#e4e4e0 1px,transparent 1px,transparent 2px)"></div>
<svg class="a" style="left:83px;top:538px" width="9" height="12" viewBox="0 0 9 12"><path d="M4.5 0L8.5 3.2V6.8L3.6 11.5 0 8.3V4z" fill="#5a90d8"/><path d="M0 4L4.5 0 8.5 3.2 4.3 7.2z" fill="#a4ccf8"/><path d="M8.5 3.2V6.8L3.6 11.5 4.3 7.2z" fill="#12307e"/></svg>
<div class="t" style="left:98px;top:537px;color:#000">[11]</div>
<div class="t" style="left:157px;top:537px;color:#000;width:280px;overflow:hidden;">0</div>
<div class="t" style="left:445px;top:537px;color:#000;width:46px;overflow:hidden">char</div>
<div class="a" style="left:9px;top:569px;width:483px;height:1px;background:#edece4"></div>
<div class="a" style="left:152px;top:553px;width:1px;height:16px;background:repeating-linear-gradient(#e4e4e0 0,#e4e4e0 1px,transparent 1px,transparent 2px)"></div>
<div class="a" style="left:440px;top:553px;width:1px;height:16px;background:repeating-linear-gradient(#e4e4e0 0,#e4e4e0 1px,transparent 1px,transparent 2px)"></div>
<svg class="a" style="left:83px;top:555px" width="9" height="12" viewBox="0 0 9 12"><path d="M4.5 0L8.5 3.2V6.8L3.6 11.5 0 8.3V4z" fill="#5a90d8"/><path d="M0 4L4.5 0 8.5 3.2 4.3 7.2z" fill="#a4ccf8"/><path d="M8.5 3.2V6.8L3.6 11.5 4.3 7.2z" fill="#12307e"/></svg>
<div class="t" style="left:98px;top:554px;color:#000">[12]</div>
<div class="t" style="left:157px;top:554px;color:#000;width:280px;overflow:hidden;">104 'h'</div>
<div class="t" style="left:445px;top:554px;color:#000;width:46px;overflow:hidden">char</div>
<div class="a" style="left:9px;top:586px;width:483px;height:1px;background:#edece4"></div>
<div class="a" style="left:152px;top:570px;width:1px;height:16px;background:repeating-linear-gradient(#e4e4e0 0,#e4e4e0 1px,transparent 1px,transparent 2px)"></div>
<div class="a" style="left:440px;top:570px;width:1px;height:16px;background:repeating-linear-gradient(#e4e4e0 0,#e4e4e0 1px,transparent 1px,transparent 2px)"></div>
<svg class="a" style="left:83px;top:572px" width="9" height="12" viewBox="0 0 9 12"><path d="M4.5 0L8.5 3.2V6.8L3.6 11.5 0 8.3V4z" fill="#5a90d8"/><path d="M0 4L4.5 0 8.5 3.2 4.3 7.2z" fill="#a4ccf8"/><path d="M8.5 3.2V6.8L3.6 11.5 4.3 7.2z" fill="#12307e"/></svg>
<div class="t" style="left:98px;top:571px;color:#000">[13]</div>
<div class="t" style="left:157px;top:571px;color:#000;width:280px;overflow:hidden;">-127 'Ѓ'</div>
<div class="t" style="left:445px;top:571px;color:#000;width:46px;overflow:hidden">char</div>
<div class="a" style="left:9px;top:603px;width:483px;height:1px;background:#edece4"></div>
<div class="a" style="left:152px;top:587px;width:1px;height:16px;background:repeating-linear-gradient(#e4e4e0 0,#e4e4e0 1px,transparent 1px,transparent 2px)"></div>
<div class="a" style="left:440px;top:587px;width:1px;height:16px;background:repeating-linear-gradient(#e4e4e0 0,#e4e4e0 1px,transparent 1px,transparent 2px)"></div>
<svg class="a" style="left:83px;top:589px" width="9" height="12" viewBox="0 0 9 12"><path d="M4.5 0L8.5 3.2V6.8L3.6 11.5 0 8.3V4z" fill="#5a90d8"/><path d="M0 4L4.5 0 8.5 3.2 4.3 7.2z" fill="#a4ccf8"/><path d="M8.5 3.2V6.8L3.6 11.5 4.3 7.2z" fill="#12307e"/></svg>
<div class="t" style="left:98px;top:588px;color:#000">[14]</div>
<div class="t" style="left:157px;top:588px;color:#000;width:280px;overflow:hidden;">58 ':'</div>
<div class="t" style="left:445px;top:588px;color:#000;width:46px;overflow:hidden">char</div>
<div class="a" style="left:9px;top:620px;width:483px;height:1px;background:#edece4"></div>
<div class="a" style="left:152px;top:604px;width:1px;height:16px;background:repeating-linear-gradient(#e4e4e0 0,#e4e4e0 1px,transparent 1px,transparent 2px)"></div>
<div class="a" style="left:440px;top:604px;width:1px;height:16px;background:repeating-linear-gradient(#e4e4e0 0,#e4e4e0 1px,transparent 1px,transparent 2px)"></div>
<svg class="a" style="left:83px;top:606px" width="9" height="12" viewBox="0 0 9 12"><path d="M4.5 0L8.5 3.2V6.8L3.6 11.5 0 8.3V4z" fill="#5a90d8"/><path d="M0 4L4.5 0 8.5 3.2 4.3 7.2z" fill="#a4ccf8"/><path d="M8.5 3.2V6.8L3.6 11.5 4.3 7.2z" fill="#12307e"/></svg>
<div class="t" style="left:98px;top:605px;color:#000">[15]</div>
<div class="t" style="left:157px;top:605px;color:#000;width:280px;overflow:hidden;">0</div>
<div class="t" style="left:445px;top:605px;color:#000;width:46px;overflow:hidden">char</div>
<div class="a" style="left:9px;top:637px;width:483px;height:1px;background:#edece4"></div>
<div class="a" style="left:152px;top:621px;width:1px;height:16px;background:repeating-linear-gradient(#e4e4e0 0,#e4e4e0 1px,transparent 1px,transparent 2px)"></div>
<div class="a" style="left:440px;top:621px;width:1px;height:16px;background:repeating-linear-gradient(#e4e4e0 0,#e4e4e0 1px,transparent 1px,transparent 2px)"></div>
<svg class="a" style="left:83px;top:623px" width="9" height="12" viewBox="0 0 9 12"><path d="M4.5 0L8.5 3.2V6.8L3.6 11.5 0 8.3V4z" fill="#5a90d8"/><path d="M0 4L4.5 0 8.5 3.2 4.3 7.2z" fill="#a4ccf8"/><path d="M8.5 3.2V6.8L3.6 11.5 4.3 7.2z" fill="#12307e"/></svg>
<div class="t" style="left:98px;top:622px;color:#000">[16]</div>
<div class="t" style="left:157px;top:622px;color:#000;width:280px;overflow:hidden;">-104 '<span style="display:inline-block;width:8px;height:8px;border:1px solid currentColor;margin:0 1px;vertical-align:-0.5px"></span>'</div>
<div class="t" style="left:445px;top:622px;color:#000;width:46px;overflow:hidden">char</div>
<div class="a" style="left:9px;top:654px;width:483px;height:1px;background:#edece4"></div>
<div class="a" style="left:152px;top:638px;width:1px;height:16px;background:repeating-linear-gradient(#e4e4e0 0,#e4e4e0 1px,transparent 1px,transparent 2px)"></div>
<div class="a" style="left:440px;top:638px;width:1px;height:16px;background:repeating-linear-gradient(#e4e4e0 0,#e4e4e0 1px,transparent 1px,transparent 2px)"></div>
<svg class="a" style="left:83px;top:640px" width="9" height="12" viewBox="0 0 9 12"><path d="M4.5 0L8.5 3.2V6.8L3.6 11.5 0 8.3V4z" fill="#5a90d8"/><path d="M0 4L4.5 0 8.5 3.2 4.3 7.2z" fill="#a4ccf8"/><path d="M8.5 3.2V6.8L3.6 11.5 4.3 7.2z" fill="#12307e"/></svg>
<div class="t" style="left:98px;top:639px;color:#000">[17]</div>
<div class="t" style="left:157px;top:639px;color:#000;width:280px;overflow:hidden;">-2 'ю'</div>
<div class="t" style="left:445px;top:639px;color:#000;width:46px;overflow:hidden">char</div>
<div class="a" style="left:16px;top:310px;width:1px;height:12px;background:#a0a0a0"></div>
<div class="a" style="left:16px;top:321px;width:14px;height:1px;background:#a0a0a0"></div>
<div class="a" style="left:33px;top:327px;width:1px;height:328px;background:#a0a0a0"></div>
<div class="a" style="left:33px;top:338px;width:14px;height:1px;background:#a0a0a0"></div>
<div class="a" style="left:50px;top:344px;width:1px;height:311px;background:#a0a0a0"></div>
<div class="a" style="left:51px;top:356px;width:16px;height:1px;background:#c0c0c8"></div>
<div class="a" style="left:51px;top:373px;width:16px;height:1px;background:#a0a0a0"></div>
<div class="a" style="left:51px;top:390px;width:16px;height:1px;background:#a0a0a0"></div>
<div class="a" style="left:51px;top:407px;width:16px;height:1px;background:#a0a0a0"></div>
<div class="a" style="left:51px;top:424px;width:16px;height:1px;background:#a0a0a0"></div>
<div class="a" style="left:51px;top:441px;width:16px;height:1px;background:#a0a0a0"></div>
<div class="a" style="left:51px;top:458px;width:16px;height:1px;background:#a0a0a0"></div>
<div class="a" style="left:51px;top:475px;width:16px;height:1px;background:#a0a0a0"></div>
<div class="a" style="left:51px;top:492px;width:16px;height:1px;background:#a0a0a0"></div>
<div class="a" style="left:51px;top:509px;width:16px;height:1px;background:#a0a0a0"></div>
<div class="a" style="left:51px;top:526px;width:16px;height:1px;background:#a0a0a0"></div>
<div class="a" style="left:51px;top:543px;width:16px;height:1px;background:#a0a0a0"></div>
<div class="a" style="left:51px;top:560px;width:16px;height:1px;background:#a0a0a0"></div>
<div class="a" style="left:51px;top:577px;width:16px;height:1px;background:#a0a0a0"></div>
<div class="a" style="left:51px;top:594px;width:16px;height:1px;background:#a0a0a0"></div>
<div class="a" style="left:51px;top:611px;width:16px;height:1px;background:#a0a0a0"></div>
<div class="a" style="left:51px;top:628px;width:16px;height:1px;background:#a0a0a0"></div>
<div class="a" style="left:51px;top:645px;width:16px;height:1px;background:#a0a0a0"></div>
<div class="a" style="left:12px;top:301px;width:9px;height:9px;border:1px solid #9c9ca8;border-radius:1px;background:linear-gradient(#fff,#dcdce4)"></div>
<div class="a" style="left:14px;top:305px;width:5px;height:1px;background:#000"></div>
<div class="a" style="left:29px;top:318px;width:9px;height:9px;border:1px solid #9c9ca8;border-radius:1px;background:linear-gradient(#fff,#dcdce4)"></div>
<div class="a" style="left:31px;top:322px;width:5px;height:1px;background:#000"></div>
<div class="a" style="left:46px;top:335px;width:9px;height:9px;border:1px solid #9c9ca8;border-radius:1px;background:linear-gradient(#fff,#dcdce4)"></div>
<div class="a" style="left:48px;top:339px;width:5px;height:1px;background:#000"></div>
<svg class="a" style="left:417px;top:333px" width="12" height="13" viewBox="0 0 12 13"><circle cx="5" cy="5" r="3.8" fill="#e8f0f8" stroke="#708090" stroke-width="1.2"/><path d="M7.5 8l3.5 4" stroke="#806040" stroke-width="2"/></svg>
<div class="dd" style="left:432px;top:339px;border-top-color:#000080;border-left-width:3px;border-right-width:3px;border-top-width:3px"></div>
<div class="a" style="left:492px;top:280px;width:17px;height:375px;background:linear-gradient(90deg,#e6e6ec,#f4f4f8 50%,#e0e0e8)"></div>
<div class="a sbtn" style="left:492px;top:280px;width:16px;height:17px"><svg class="a" style="left:3px;top:5px" width="9" height="7"><path d="M1 5.5L4.5 2 8 5.5" stroke="#303040" stroke-width="2" fill="none"/></svg></div>
<div class="a" style="left:493px;top:298px;width:15px;height:145px;border:1px solid #b8b8c8;border-radius:2px;background:linear-gradient(90deg,#e8e8f0,#fafafc 50%,#dcdce6)"></div>
<div class="a" style="left:497px;top:366px;width:7px;height:7px;background:repeating-linear-gradient(#707080 0,#707080 1px,transparent 1px,transparent 2px)"></div>
<div class="a sbtn" style="left:492px;top:638px;width:16px;height:17px"><svg class="a" style="left:3px;top:5px" width="9" height="7"><path d="M1 1.5L4.5 5 8 1.5" stroke="#303040" stroke-width="2" fill="none"/></svg></div>
<div class="a" style="left:510px;top:260px;width:4px;height:397px;background:#e6e6ee"></div>
<div class="a" style="left:514px;top:260px;width:509px;height:397px;background:#fff;border:1px solid #8c8ca4"></div>
<div class="a" style="left:515px;top:261px;width:507px;height:18px;background:linear-gradient(#f8f8fa,#ececf2);border-bottom:1px solid #9c9cb0"></div>
<div class="t" style="left:518px;top:263px;letter-spacing:-0.28px">Command Window</div>
<div class="dd" style="left:975px;top:269px;border-left-width:4px;border-right-width:4px;border-top-width:4px"></div>
<svg class="a" style="left:990px;top:265px" width="10" height="11"><path d="M2.5 1.5h5v5h-5z M1 6.5h8 M5 6.5v4" stroke="#000" stroke-width="1.2" fill="none"/><path d="M6 2v4" stroke="#000"/></svg>
<svg class="a" style="left:1008px;top:265px" width="10" height="10"><path d="M1 1L9 9M9 1L1 9" stroke="#000" stroke-width="1.6"/></svg>
<div class="t" style="left:517px;top:280px;font-size:10px">&gt;</div>
<div class="a" style="left:1005px;top:280px;width:17px;height:360px;background:#f8f8fa"></div>
<div class="a" style="left:1005px;top:280px;width:16px;height:17px;border:1px solid #e4e4e0;border-radius:2px;background:#f0f0ec"><svg class="a" style="left:3px;top:5px" width="9" height="7"><path d="M1 5.5L4.5 2 8 5.5" stroke="#c8c8c0" stroke-width="2" fill="none"/></svg></div>
<div class="a" style="left:1005px;top:622px;width:16px;height:17px;border:1px solid #e4e4e0;border-radius:2px;background:#f0f0ec"><svg class="a" style="left:3px;top:5px" width="9" height="7"><path d="M1 1.5L4.5 5 8 1.5" stroke="#c8c8c0" stroke-width="2" fill="none"/></svg></div>
<div class="a" style="left:515px;top:640px;width:490px;height:16px;background:#f8f8fa"></div>
<div class="a" style="left:516px;top:640px;width:17px;height:16px;border:1px solid #e4e4e0;border-radius:2px;background:#f0f0ec"><svg class="a" style="left:5px;top:3px" width="7" height="9"><path d="M5.5 1L2 4.5 5.5 8" stroke="#c8c8c0" stroke-width="2" fill="none"/></svg></div>
<div class="a" style="left:988px;top:640px;width:17px;height:16px;border:1px solid #e4e4e0;border-radius:2px;background:#f0f0ec"><svg class="a" style="left:5px;top:3px" width="7" height="9"><path d="M1.5 1L5 4.5 1.5 8" stroke="#c8c8c0" stroke-width="2" fill="none"/></svg></div>
<div class="a" style="left:1005px;top:640px;width:17px;height:16px;background:#e8e8ec"></div>
<div class="a" style="left:0;top:656px;width:1024px;height:3px;background:#f6f6f8"></div>
<div class="a" style="left:0;top:659px;width:1024px;height:1px;background:#9a9aae"></div>
<div class="a" style="left:0;top:660px;width:1024px;height:21px;background:linear-gradient(90deg,#dcdce4,#e6e6ee 50%,#eeeef4)"></div>
<div class="a" style="left:0;top:681px;width:1024px;height:1px;background:#8e8ea0"></div>
<div class="a" style="left:510px;top:656px;width:4px;height:3px;background:#e6e6ee"></div>
<div class="a" style="left:106px;top:659px;width:65px;height:21px;background:#fcfcfd;border:1px solid #9898a8;border-top:none;border-radius:0 0 3px 3px"></div>
<div class="a" style="left:664px;top:659px;width:114px;height:21px;background:#fcfcfd;border:1px solid #9898a8;border-top:none;border-radius:0 0 3px 3px"></div>
<svg class="a" style="left:4px;top:663px" width="15" height="14" viewBox="0 0 15 14"><rect x="0.5" y="0.5" width="13" height="11" fill="#f4f8ff" stroke="#3858a8"/><rect x="1" y="1" width="12" height="2" fill="#5888d8"/><path d="M3 5.5h3M7 5.5h5M3 7.5h3M7 7.5h5M3 9.5h3M7 9.5h5" stroke="#5070c0"/><rect x="2" y="7" width="9" height="3" fill="#30a030"/></svg>
<div class="t" style="left:21px;top:663px;color:#6c6c7c">Autos</div>
<div class="a" style="left:52px;top:662px;width:1px;height:16px;background:#9898b0"></div>
<svg class="a" style="left:55px;top:663px" width="15" height="14" viewBox="0 0 15 14"><rect x="0.5" y="0.5" width="13" height="11" fill="#f4f8ff" stroke="#3858a8"/><rect x="1" y="1" width="12" height="2" fill="#5888d8"/><path d="M3 5.5h3M7 5.5h5M3 7.5h3M7 7.5h5M3 9.5h3M7 9.5h5" stroke="#5070c0"/><path d="M6 10l3 3 5-6" stroke="#d04080" fill="none" stroke-width="1.2"/><path d="M9 8l4 4" stroke="#e0b020"/></svg>
<div class="t" style="left:73px;top:663px;color:#6c6c7c">Locals</div>
<svg class="a" style="left:110px;top:663px" width="15" height="14" viewBox="0 0 15 14"><rect x="0.5" y="0.5" width="13" height="11" fill="#f4f8ff" stroke="#3858a8"/><rect x="1" y="1" width="12" height="2" fill="#5888d8"/><path d="M3 5.5h3M7 5.5h5M3 7.5h3M7 7.5h5M3 9.5h3M7 9.5h5" stroke="#5070c0"/><circle cx="3" cy="12" r="2" fill="none" stroke="#404050"/><circle cx="8" cy="12" r="2" fill="none" stroke="#404050"/></svg>
<div class="t" style="left:126px;top:663px">Watch 1</div>
<svg class="a" style="left:517px;top:662px" width="16" height="16" viewBox="0 0 16 16"><rect x="5.5" y="0.5" width="6" height="5" fill="#fff" stroke="#506080"/><rect x="3.5" y="4.5" width="6" height="5" fill="#fff" stroke="#506080"/><rect x="8.5" y="6.5" width="6" height="6" fill="#e0e8f8" stroke="#506080"/><path d="M1 10l3 3-3 3z" fill="#3060c0"/></svg>
<div class="t" style="left:534px;top:663px;color:#6c6c7c;letter-spacing:-0.35px">Call Stack</div>
<div class="a" style="left:584px;top:662px;width:1px;height:16px;background:#9898b0"></div>
<svg class="a" style="left:587px;top:662px" width="16" height="16" viewBox="0 0 16 16"><rect x="0.5" y="0.5" width="13" height="11" fill="#f4f8ff" stroke="#3858a8"/><rect x="1" y="1" width="12" height="2" fill="#5888d8"/><circle cx="11" cy="11" r="4.5" fill="#e04030"/><circle cx="10" cy="9.5" r="1.5" fill="#f8a090"/></svg>
<div class="t" style="left:604px;top:663px;color:#6c6c7c;letter-spacing:-0.2px">Breakpoints</div>
<svg class="a" style="left:669px;top:663px" width="15" height="14" viewBox="0 0 15 14"><rect x="0.5" y="1.5" width="13" height="11" fill="#f8faff" stroke="#3858a8"/><rect x="1" y="2" width="12" height="1.5" fill="#5888d8"/><path d="M3 6l2 2-2 2" stroke="#000" fill="none"/></svg>
<div class="t" style="left:684px;top:663px;letter-spacing:-0.3px">Command Window</div>
<svg class="a" style="left:779px;top:663px" width="15" height="14" viewBox="0 0 15 14"><rect x="0.5" y="0.5" width="13" height="11" fill="#f4f8ff" stroke="#3858a8"/><rect x="1" y="1" width="12" height="2" fill="#5888d8"/><path d="M3 5.5h3M7 5.5h5M3 7.5h3M7 7.5h5M3 9.5h3M7 9.5h5" stroke="#5070c0"/><path d="M1 6v7" stroke="#d02020" stroke-width="2"/></svg>
<div class="t" style="left:796px;top:663px;color:#6c6c7c;letter-spacing:-0.15px">Immediate Window</div>
<div class="a" style="left:891px;top:662px;width:1px;height:16px;background:#9898b0"></div>
<svg class="a" style="left:895px;top:663px" width="14" height="14" viewBox="0 0 14 14"><rect x="0.5" y="0.5" width="12" height="13" fill="#f4f8ff" stroke="#3858a8"/><path d="M3 3.5h7M3 5.5h7M3 7.5h7M3 9.5h7M3 11.5h5" stroke="#5070c0"/></svg>
<div class="t" style="left:912px;top:663px;color:#6c6c7c">Output</div>
<div class="a" style="left:0;top:682px;width:1024px;height:22px;background:linear-gradient(#dcdce2,#dedee2 60%,#e2e2e6 90%,#c8c8d0)"></div>
<div class="t" style="left:9px;top:688px">Ready</div>
<div class="a" style="left:0;top:704px;width:1024px;height:64px;background:linear-gradient(#bcbccc 0,#bcbccc 1px,#fafafc 1px,#fafafc 2px,#9090a8 2px,#707088 3px,#707088 4px,#f6f6fa 4px,#e8e8f0 7px,#c4c4d4 7px,#a6a6be 8px,#aaaac2 15px,#b8bcc8 16px,#c4ccd4 19px,#c6ccd4 49px,#d8d8dc 51px,#e4e4e8 60px,#eeeef0 61px,#808088 62px,#707078 64px)"></div>
<div class="a" style="left:0;top:708px;width:97px;height:30px;border-radius:0 14px 14px 0/0 15px 15px 0;background:linear-gradient(#2a8a2a 0,#a0e0a0 2px,#6cc86c 4px,#4cb44c 9px,#3ca83c 16px,#329c32 23px,#2a8e2a 27px,#1a5a1a 30px);box-shadow:inset -3px 0 3px #1a6a1a"></div>
<svg class="a" style="left:11px;top:714px" width="19" height="18" viewBox="0 0 19 18"><path d="M3 2c2-1 4-1 6 0l-1 6.5c-2-1-4-1-6 0z" fill="#f06030"/><path d="M10 2.5c2 1 4 1 6.5 0l-1.2 6.5c-2.2 1-4.2 1-6.3 0z" fill="#70c040"/><path d="M1.8 9.5c2-1 4-1 6 0l-1 6.5c-2-1-4-1-6 0z" fill="#4080e8"/><path d="M8.8 10c2 1 4 1 6.3 0l-1.1 6.5c-2.2 1-4.2 1-6.2 0z" fill="#f8c820"/></svg>
<div class="t" style="left:35px;top:715px;font-size:17px;line-height:20px;font-style:italic;font-weight:bold;letter-spacing:-0.3px;color:#f4fff4;text-shadow:1px 1px 1px #1a5a1a">пуск</div>
<div class="a" style="left:106px;top:714px;width:2px;height:50px;background:repeating-linear-gradient(#8c8c9c 0,#8c8c9c 2px,transparent 2px,transparent 4px)"></div>
<div class="a" style="left:109px;top:716px;width:2px;height:50px;background:repeating-linear-gradient(#8c8c9c 0,#8c8c9c 2px,transparent 2px,transparent 4px)"></div>
<div class="a" style="left:229px;top:714px;width:2px;height:50px;background:repeating-linear-gradient(#8c8c9c 0,#8c8c9c 2px,transparent 2px,transparent 4px)"></div>
<div class="a" style="left:232px;top:716px;width:2px;height:50px;background:repeating-linear-gradient(#8c8c9c 0,#8c8c9c 2px,transparent 2px,transparent 4px)"></div>
<svg class="a" style="left:118px;top:715px" width="16" height="16"><rect x="1" y="1" width="14" height="14" rx="3" fill="#3a8ae0"/><path d="M4 8a4 4 0 1 1 8 0H5a3 3 0 0 0 6 1" stroke="#fff" stroke-width="2" fill="none"/></svg>
<svg class="a" style="left:141px;top:715px" width="16" height="16"><rect x="1" y="2" width="14" height="13" fill="#505a50"/><rect x="2" y="1" width="12" height="3" fill="#8090c0"/><circle cx="8" cy="9" r="5" fill="#e8e8f0"/><circle cx="8" cy="9" r="1.5" fill="#606060"/></svg>
<svg class="a" style="left:164px;top:715px" width="16" height="16"><rect x="1" y="1" width="14" height="14" rx="1" fill="#2040c0"/><rect x="5" y="1" width="6" height="5" fill="#e0e0f0"/><rect x="3" y="8" width="10" height="6" fill="#fff"/><path d="M4 10h8M4 12h8" stroke="#e04040"/></svg>
<svg class="a" style="left:118px;top:745px" width="16" height="16"><path d="M2 11L10 2l4 3-8 9z" fill="#f0c040" stroke="#604010"/><path d="M4 9l6 3" stroke="#604010"/></svg>
<svg class="a" style="left:141px;top:745px" width="16" height="16"><ellipse cx="8" cy="8" rx="7" ry="6.5" fill="#5a3018"/><ellipse cx="8" cy="8" rx="4" ry="3.5" fill="#c89060"/><ellipse cx="8" cy="8" rx="2" ry="1.5" fill="#3a2010"/></svg>
<svg class="a" style="left:164px;top:745px" width="16" height="16"><rect x="1" y="1" width="14" height="14" rx="2" fill="#e05020"/><path d="M4 12l4-8 3 8" stroke="#802010" stroke-width="2" fill="none"/></svg>
<div class="t" style="left:213px;top:710px;font-weight:bold;font-size:12px">»</div>
<div class="a" style="left:240px;top:711px;width:144px;height:24px;border-radius:3px;background:linear-gradient(#fcfcfe,#f0f0f4 40%,#d8d8e2);border:1px solid #a4a4b4;border-bottom-color:#8a8a98"></div>
<svg class="a" style="left:249px;top:715px" width="16" height="16"><path d="M1 3h5l1 1h7v9H1z" fill="#e0b840" stroke="#a08020"/><path d="M3 7h12l-2 6H1z" fill="#f8e070" stroke="#a08020"/></svg>
<div class="t" style="left:269px;top:717px;color:#000">q4</div>
<div class="a" style="left:385px;top:711px;width:144px;height:24px;border-radius:3px;background:linear-gradient(#fcfcfe,#f0f0f4 40%,#d8d8e2);border:1px solid #a4a4b4;border-bottom-color:#8a8a98"></div>
<svg class="a" style="left:394px;top:715px" width="16" height="16"><path d="M1 3h5l1 1h7v9H1z" fill="#e0b840" stroke="#a08020"/><path d="M3 7h12l-2 6H1z" fill="#f8e070" stroke="#a08020"/></svg>
<div class="t" style="left:414px;top:717px;color:#000">Version_1_33</div>
<div class="a" style="left:531px;top:711px;width:142px;height:24px;border-radius:3px;background:linear-gradient(#fcfcfe,#f0f0f4 40%,#d8d8e2);border:1px solid #a4a4b4;border-bottom-color:#8a8a98"></div>
<svg class="a" style="left:540px;top:715px" width="16" height="16"><rect x="0.5" y="0.5" width="15" height="15" rx="2" fill="#e86030" stroke="#803010"/><path d="M4 12l4-8 3 8" stroke="#802010" stroke-width="2" fill="none"/></svg>
<div class="t" style="left:560px;top:717px;color:#000">AIMP Classic</div>
<div class="a" style="left:675px;top:711px;width:143px;height:24px;border-radius:3px;background:linear-gradient(#fcfcfe,#f0f0f4 40%,#d8d8e2);border:1px solid #a4a4b4;border-bottom-color:#8a8a98"></div>
<svg class="a" style="left:684px;top:715px" width="16" height="16"><ellipse cx="8" cy="8" rx="6" ry="7" fill="#d02020"/><ellipse cx="8" cy="8" rx="2.5" ry="5" fill="#fff"/></svg>
<div class="t" style="left:704px;top:717px;color:#000">Онлайн игра Ganj...</div>
<div class="a" style="left:240px;top:741px;width:144px;height:24px;border-radius:3px;background:linear-gradient(#fcfcfe,#f0f0f4 40%,#d8d8e2);border:1px solid #a4a4b4;border-bottom-color:#8a8a98"></div>
<svg class="a" style="left:249px;top:745px" width="16" height="16"><circle cx="8" cy="8" r="7" fill="#2050a8"/><circle cx="8" cy="8" r="5.5" fill="#3a78d0"/><path d="M4.5 11V5.5h7V11M8 6v5" stroke="#fff" stroke-width="1.6" fill="none"/></svg>
<div class="t" style="left:269px;top:747px;color:#000">Онлайн игра Ganj...</div>
<div class="a" style="left:385px;top:741px;width:144px;height:24px;border-radius:3px;background:linear-gradient(#7c8494,#8e96a6 20%,#949cac);border:1px solid #6a6a7a"></div>
<svg class="a" style="left:394px;top:745px" width="18" height="16"><path d="M2 9l6-6 5 2-6 8z" fill="#e8c020"/><path d="M4 12l7-8 3 3-6 6z" fill="#d84a20"/><path d="M11 12l4-4 2 2-3 3z" fill="#9ac830"/><ellipse cx="9" cy="8" rx="8" ry="6" fill="none" stroke="#6a8ca0" stroke-width="0.8"/></svg>
<div class="t" style="left:414px;top:747px;color:#fff">Version_1_33 (De...</div>
<div class="a" style="left:531px;top:741px;width:142px;height:24px;border-radius:3px;background:linear-gradient(#fcfcfe,#f0f0f4 40%,#d8d8e2);border:1px solid #a4a4b4;border-bottom-color:#8a8a98"></div>
<svg class="a" style="left:540px;top:745px" width="16" height="16"><rect x="0" y="2" width="16" height="12" fill="#000" stroke="#808080"/><text x="1" y="11" font-size="7" font-family="Liberation Sans" font-weight="bold" fill="#fff">C:\</text></svg>
<div class="t" style="left:560px;top:747px;color:#000">c:\Documents and...</div>
<div class="a" style="left:829px;top:716px;width:2px;height:48px;background:repeating-linear-gradient(#8c8c9c 0,#8c8c9c 2px,transparent 2px,transparent 4px)"></div>
<div class="a" style="left:832px;top:718px;width:2px;height:48px;background:repeating-linear-gradient(#8c8c9c 0,#8c8c9c 2px,transparent 2px,transparent 4px)"></div>
<div class="a" style="left:867px;top:707px;width:157px;height:61px;background:linear-gradient(#fafafc 0,#f0f0f6 3px,#e0e0ea 12px,#d4d4e2 40px,#ccccdc 58px,#808088 59px,#707078 61px);border-left:1px solid #686880"></div>
<div class="t" style="left:842px;top:732px">EN</div>
<svg class="a" style="left:858px;top:728px" width="19" height="19"><circle cx="9.5" cy="9.5" r="8.5" fill="#a8a8b8" stroke="#808090"/><circle cx="9.5" cy="8" r="6" fill="#d0d0dc"/><path d="M11 5l-4 4.5 4 4.5" stroke="#fff" stroke-width="2.2" fill="none"/></svg>
<svg class="a" style="left:879px;top:711px" width="17" height="18"><rect x="0.5" y="0.5" width="14" height="15" fill="#f8f0a0" stroke="#2040a0" stroke-dasharray="1 1"/><path d="M1 3c2 1 3 3 3 5 1-1 2-1 2 0l1.5-2 1.5 2c0-1 1-1 2 0 0-2 1-4 3-5v10c-1-1-2-1-3 0-1-1-2-1-2 0l-1.5 2-1.5-2c0-1-1-1-2 0-1-1-2-1-3 0z" fill="#101010"/><ellipse cx="7.5" cy="10" rx="3.5" ry="2" fill="#f0e060"/></svg>
<svg class="a" style="left:896px;top:711px" width="17" height="18"><circle cx="8" cy="8" r="7" fill="#70b8d8"/><circle cx="8" cy="6" r="4" fill="#a8e0f0"/><path d="M1 7h14" stroke="#404040"/><rect x="2" y="7" width="5" height="4" rx="1" fill="#e8f0f0" stroke="#303030"/><rect x="9" y="7" width="5" height="4" rx="1" fill="#e8f0f0" stroke="#303030"/></svg>
<svg class="a" style="left:914px;top:711px" width="17" height="18"><rect x="0" y="0" width="16" height="16" rx="2" fill="#202020"/><path d="M5 3l8 5-8 5z" fill="#f06020"/></svg>
<svg class="a" style="left:934px;top:712px" width="17" height="18"><circle cx="7.5" cy="7.5" r="7" fill="#2050a8"/><circle cx="7.5" cy="7.5" r="5.5" fill="#3a78d0"/><path d="M4 11V5h7v6M7.5 5.5v5" stroke="#fff" stroke-width="1.6" fill="none"/></svg>
<svg class="a" style="left:878px;top:731px" width="17" height="18"><circle cx="8" cy="8" r="7" fill="#5a3018"/><ellipse cx="9" cy="8" rx="4" ry="5" fill="#b07840"/><ellipse cx="9" cy="8" rx="2" ry="3" fill="#3a2010"/></svg>
<svg class="a" style="left:897px;top:731px" width="17" height="18"><circle cx="7.5" cy="7.5" r="7" fill="#2050a8"/><circle cx="7.5" cy="7.5" r="5.5" fill="#3a78d0"/><path d="M4 11V5h7v6M7.5 5.5v5" stroke="#fff" stroke-width="1.6" fill="none"/></svg>
<svg class="a" style="left:916px;top:730px" width="17" height="18"><path d="M1 1h3v5l4-5h4l-5 6 5 6H8L4 8v5H1z" fill="#e02020"/><path d="M8 9l6 6" stroke="#000" stroke-width="2"/></svg>
<svg class="a" style="left:932px;top:730px" width="17" height="18"><rect x="5" y="1" width="10" height="8" fill="#70a8e0" stroke="#3060a0"/><rect x="1" y="7" width="10" height="8" fill="#90c0f0" stroke="#3060a0"/></svg>
<svg class="a" style="left:878px;top:750px" width="17" height="18"><circle cx="7" cy="7" r="6" fill="#909098"/><circle cx="7" cy="7" r="4" fill="#606068"/><circle cx="6" cy="6" r="2" fill="#d0d0d8"/></svg>
<svg class="a" style="left:897px;top:748px" width="17" height="18"><rect x="0" y="0" width="15" height="17" fill="#30c030"/><path d="M2 3h11M3 6h9M4 9h7M5 12h5" stroke="#103010" stroke-width="1.6"/><text x="2" y="16" font-size="6" fill="#000" font-family="Liberation Sans">9</text></svg>
<svg class="a" style="left:917px;top:749px" width="17" height="18"><rect x="0" y="0" width="13" height="16" fill="#e8e0e0"/><circle cx="6.5" cy="8" r="5" fill="#c06040"/><circle cx="5" cy="7" r="1" fill="#fff"/><circle cx="8" cy="7" r="1" fill="#fff"/></svg>
<svg class="a" style="left:932px;top:749px" width="17" height="18"><rect x="0" y="0" width="16" height="17" fill="#808080"/><text x="1" y="13" font-size="11" fill="#fff" font-family="Liberation Sans">En</text></svg>
<div class="t" style="left:972px;top:713px">9:18</div>
<div class="t" style="left:965px;top:733px">четвер</div>
<div class="t" style="left:955px;top:751px">22.11.2007</div>
</body></html>
